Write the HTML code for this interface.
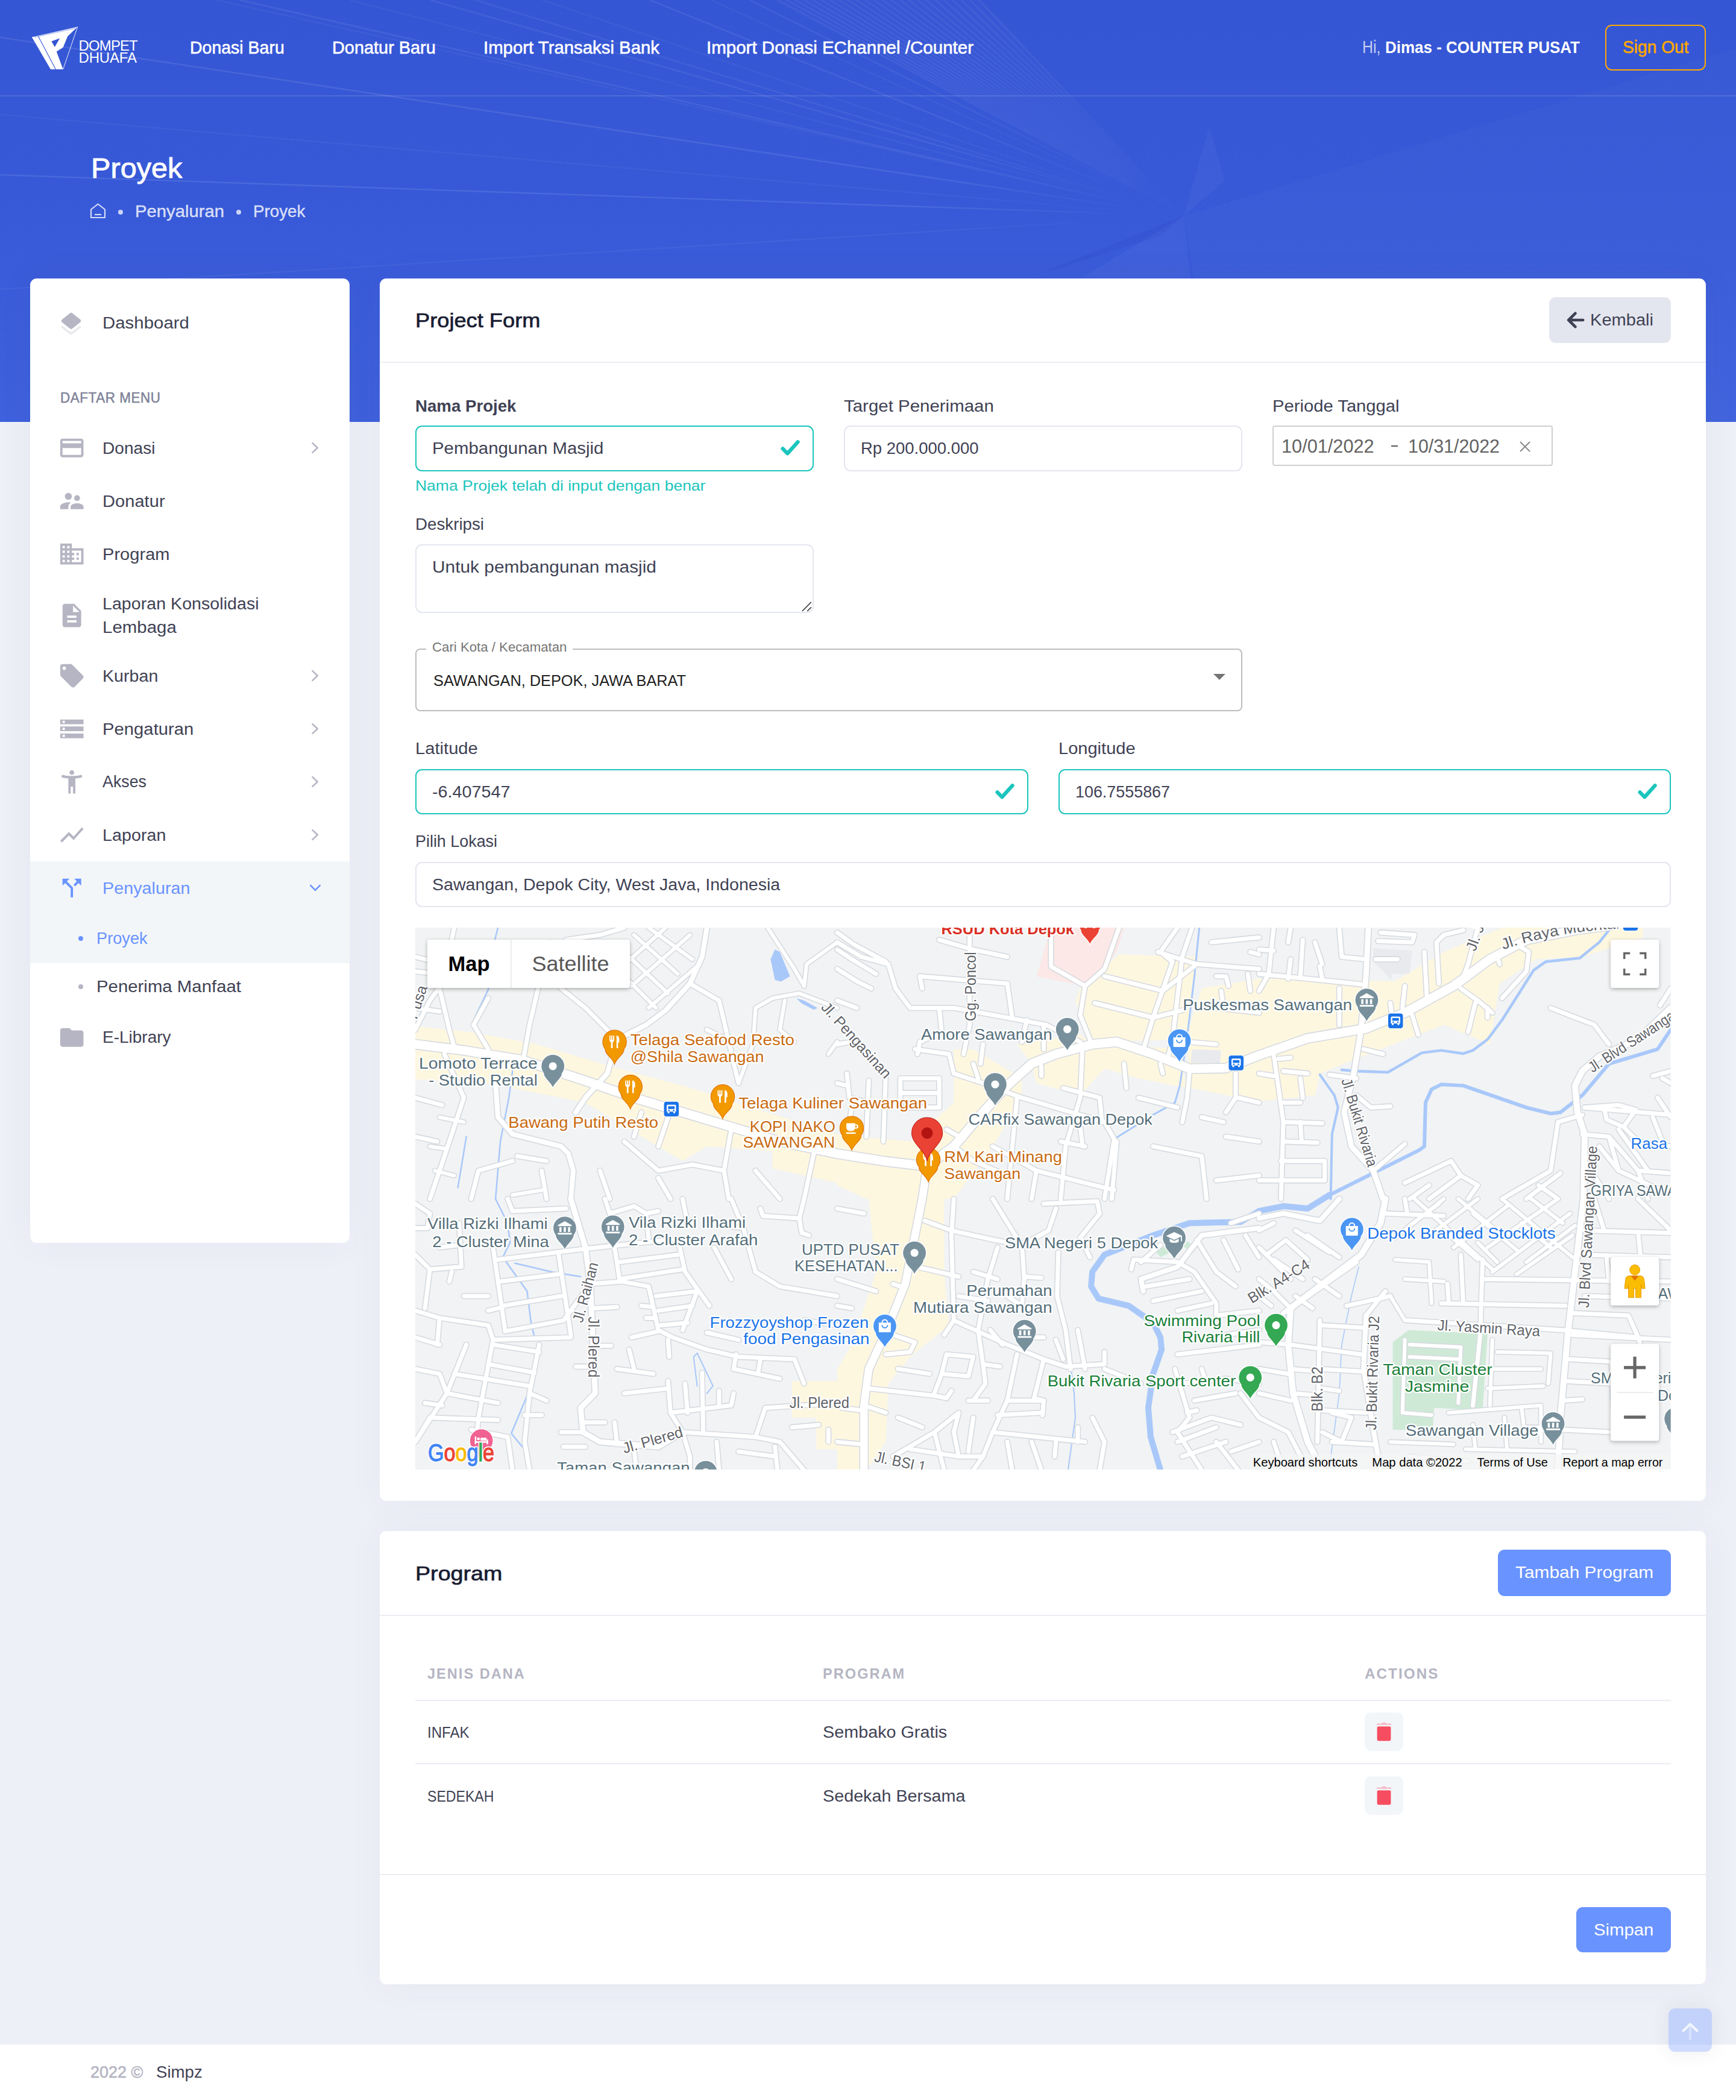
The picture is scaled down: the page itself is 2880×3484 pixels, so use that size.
<!DOCTYPE html>
<html lang="en">
<head>
<meta charset="utf-8">
<title>Proyek</title>
<style>
*{box-sizing:border-box;margin:0;padding:0}
html{background:#EEF0F8}
body{zoom:2;width:1440px;height:1742px;position:relative;overflow:hidden;background:#EEF0F8;font-family:"Liberation Sans",sans-serif;font-size:13.5px;color:#3F4254;-webkit-font-smoothing:antialiased}
.abs{position:absolute}
.t{position:absolute;white-space:nowrap;line-height:1;transform:translateY(-50%)}
/* header */
#hbg{position:absolute;left:0;top:0;width:1440px;height:350px;background:linear-gradient(180deg,#3556D4 0%,#3759D8 45%,#3F61DD 100%);overflow:hidden}
#hline{position:absolute;left:0;top:79px;width:1440px;height:1px;background:rgba(255,255,255,.12)}
.b{position:absolute;white-space:nowrap;line-height:1;transform-origin:0 0;transform:translateY(-.824em) scaleX(var(--sx,1))}
.m{-webkit-text-stroke:.3px currentColor}
.nav{-webkit-text-stroke:.3px #fff;color:#fff;font-size:14.6px;font-weight:400;top:44.25px}
/* cards */
.card{position:absolute;background:#fff;border-radius:5.5px;box-shadow:0 0 30px 0 rgba(82,63,105,.05)}
.hr{position:absolute;left:0;right:0;height:1px;background:#EBEDF3}
/* aside */
.mi{color:#3F4254;font-size:13.5px;left:60px}
.mi.sub{left:55px}
.chev{position:absolute;left:231px;width:10px;height:10px}
.ico{position:absolute;left:23px;width:24px;height:24px;fill:#B5B5C3}
/* form */
.lbl{color:#3F4254;font-size:13.5px}
.inp{position:absolute;height:37.7px;border:1px solid #E4E6EF;border-radius:5.5px;background:#fff}
.inp.ok{border-color:#1BC5BD}
.inp .t{left:13px;top:50%;font-size:13.5px;color:#3F4254}
.chk{position:absolute;right:10px;top:50%;margin-top:-7px;width:14px;height:14px}
.btn{position:absolute;border-radius:5.5px;color:#fff;background:#6993FF}
.th{color:#B5B5C3;font-size:11.7px;font-weight:700}
.td{color:#3F4254;font-size:13.5px}
.del{position:absolute;width:32px;height:32px;border-radius:5.5px;background:#F3F6F9}
</style>
</head>
<body>
<!-- HEADER BG -->
<div id="hbg">
<svg class="abs" style="left:0;top:0" width="1440" height="350" viewBox="0 0 1440 350" fill="none">
<defs><radialGradient id="fade" cx="982" cy="179" r="520" gradientUnits="userSpaceOnUse"><stop offset=".06" stop-color="#000"/><stop offset=".42" stop-color="#fff"/></radialGradient><mask id="fm"><rect width="1440" height="350" fill="url(#fade)"/></mask></defs>
<polygon points="982,179 1440,40 1440,350 1010,350" fill="rgba(255,255,255,.02)"/>
<polygon points="982,179 700,350 1000,350" fill="rgba(255,255,255,.035)"/>
<polygon points="982,179 860,228 962,196" fill="rgba(20,40,160,.08)"/>
<polygon points="982,179 1003,105 1016,150" fill="rgba(255,255,255,.035)"/>
<polygon points="640,0 815,0 982,179" fill="rgba(255,255,255,.012)"/>
<g mask="url(#fm)">
<path d="M982 179 L0 240" stroke="rgba(255,255,255,0.045)" stroke-width="1.3"/>
<path d="M982 179 L0 145" stroke="rgba(255,255,255,0.09)" stroke-width="1.3"/>
<path d="M982 179 L0 95" stroke="rgba(255,255,255,0.04)" stroke-width="1.3"/>
<path d="M982 179 L0 31" stroke="rgba(255,255,255,0.09)" stroke-width="1.3"/>
<path d="M982 179 L0 -40" stroke="rgba(255,255,255,0.04)" stroke-width="1.3"/>
<path d="M982 179 L0 -120" stroke="rgba(255,255,255,0.06)" stroke-width="1.3"/>
<path d="M982 179 L199 0" stroke="rgba(255,255,255,0.07)" stroke-width="1.3"/>
<path d="M982 179 L290 0" stroke="rgba(255,255,255,0.04)" stroke-width="1.3"/>
<path d="M982 179 L357 0" stroke="rgba(255,255,255,0.07)" stroke-width="1.3"/>
<path d="M982 179 L450 0" stroke="rgba(255,255,255,0.04)" stroke-width="1.3"/>
<path d="M982 179 L539 0" stroke="rgba(255,255,255,0.07)" stroke-width="1.3"/>
<path d="M982 179 L590 0" stroke="rgba(255,255,255,0.04)" stroke-width="1.3"/>
<path d="M982 179 L622 0" stroke="rgba(255,255,255,0.06)" stroke-width="1.3"/>
<path d="M982 179 L645.0 0" stroke="rgba(255,255,255,.05)" stroke-width="1.5"/>
<path d="M982 179 L652.3 0" stroke="rgba(255,255,255,.05)" stroke-width="1.5"/>
<path d="M982 179 L659.5 0" stroke="rgba(255,255,255,.05)" stroke-width="1.5"/>
<path d="M982 179 L666.8 0" stroke="rgba(255,255,255,.05)" stroke-width="1.5"/>
<path d="M982 179 L674.0 0" stroke="rgba(255,255,255,.05)" stroke-width="1.5"/>
<path d="M982 179 L681.3 0" stroke="rgba(255,255,255,.05)" stroke-width="1.5"/>
<path d="M982 179 L688.6 0" stroke="rgba(255,255,255,.05)" stroke-width="1.5"/>
<path d="M982 179 L695.8 0" stroke="rgba(255,255,255,.05)" stroke-width="1.5"/>
<path d="M982 179 L703.1 0" stroke="rgba(255,255,255,.05)" stroke-width="1.5"/>
<path d="M982 179 L710.3 0" stroke="rgba(255,255,255,.05)" stroke-width="1.5"/>
<path d="M982 179 L717.6 0" stroke="rgba(255,255,255,.05)" stroke-width="1.5"/>
<path d="M982 179 L724.9 0" stroke="rgba(255,255,255,.05)" stroke-width="1.5"/>
<path d="M982 179 L732.1 0" stroke="rgba(255,255,255,.05)" stroke-width="1.5"/>
<path d="M982 179 L739.4 0" stroke="rgba(255,255,255,.05)" stroke-width="1.5"/>
<path d="M982 179 L746.7 0" stroke="rgba(255,255,255,.05)" stroke-width="1.5"/>
<path d="M982 179 L753.9 0" stroke="rgba(255,255,255,.05)" stroke-width="1.5"/>
<path d="M982 179 L761.2 0" stroke="rgba(255,255,255,.05)" stroke-width="1.5"/>
<path d="M982 179 L768.4 0" stroke="rgba(255,255,255,.05)" stroke-width="1.5"/>
<path d="M982 179 L775.7 0" stroke="rgba(255,255,255,.05)" stroke-width="1.5"/>
<path d="M982 179 L783.0 0" stroke="rgba(255,255,255,.05)" stroke-width="1.5"/>
<path d="M982 179 L790.2 0" stroke="rgba(255,255,255,.05)" stroke-width="1.5"/>
<path d="M982 179 L797.5 0" stroke="rgba(255,255,255,.05)" stroke-width="1.5"/>
<path d="M982 179 L804.7 0" stroke="rgba(255,255,255,.05)" stroke-width="1.5"/>
<path d="M982 179 L812.0 0" stroke="rgba(255,255,255,.05)" stroke-width="1.5"/>
</g>
</svg>
</div>
<div id="hline"></div>
<!-- TOPBAR -->
<svg class="abs" style="left:0;top:0" width="140" height="80" viewBox="0 0 140 80">
<g fill="#fff" stroke="none">
<path d="M26.4 30.7 L64.4 22.1 L56.1 30.1 L52.3 39.4 L46.9 42.7 L52.3 57.5 L42 57.5 Z"/>
</g>
<path d="M42.7 34.3 L49.6 31.8 L45.4 39.0 Z" fill="#3556D4"/>
<path d="M31.8 30.2 L46.2 57.5" stroke="#3556D4" stroke-width=".55" fill="none"/><path d="M27.5 30.45 L64 22.2 M29 30.9 L62 23.6" stroke="#3556D4" stroke-width=".25" fill="none"/>
<path d="M64.4 22.1 L52.3 57.5" stroke="#fff" stroke-width=".45" fill="none"/>
</svg>
<div class="b" style="left:65.3px;top:41.8px;font-size:12px;color:#fff;letter-spacing:-.45px">DOMPET</div>
<div class="b" style="left:65.3px;top:52.2px;font-size:12px;color:#fff;letter-spacing:-.1px">DHUAFA</div>
<div class="b nav" id="n1" style="left:157.4px;--sx:0.9762">Donasi Baru</div>
<div class="b nav" id="n2" style="left:275.6px;--sx:0.9896">Donatur Baru</div>
<div class="b nav" id="n3" style="left:401.2px;--sx:1.0056">Import Transaksi Bank</div>
<div class="b nav" id="n4" style="left:586px;--sx:1.0113">Import Donasi EChannel /Counter</div>
<div class="b" id="n5" style="left:1130px;top:43.9px;font-size:14.6px;color:rgba(255,255,255,.72);--sx:0.8518">Hi,</div>
<div class="b" id="n6" style="left:1149px;top:43.9px;font-size:13.9px;color:#fff;font-weight:700;--sx:0.9350">Dimas - COUNTER PUSAT</div>
<div class="abs" style="left:1331.7px;top:20.7px;width:83.2px;height:38px;border:1px solid #FFA800;border-radius:5.5px"></div>
<div class="b" id="n7" style="left:1346px;top:43.9px;font-size:14.6px;color:#FFA800;-webkit-text-stroke:.3px #FFA800;--sx:0.9650">Sign Out</div>

<!-- SUBHEADER -->
<div class="b" id="s1" style="left:75.3px;top:147.1px;font-size:23.3px;color:#fff;-webkit-text-stroke:.45px #fff;--sx:1.0440">Proyek</div>
<svg class="abs" style="left:74.7px;top:168.7px" width="13.5" height="12.7" viewBox="0 0 27 25.4" fill="none" stroke="rgba(255,255,255,.78)" stroke-width="2.2" stroke-linejoin="round"><path d="M2 10.5 L13.5 1.5 L25 10.5 V24 H2 Z"/><path d="M8 19 H19"/></svg>
<div class="abs" style="left:98px;top:173.9px;width:4px;height:4px;border-radius:50%;background:rgba(255,255,255,.75)"></div>
<div class="b" id="s2" style="left:111.8px;top:180px;font-size:13.8px;color:rgba(255,255,255,.8);-webkit-text-stroke:.2px rgba(255,255,255,.8);--sx:1.0601">Penyaluran</div>
<div class="abs" style="left:196px;top:173.9px;width:4px;height:4px;border-radius:50%;background:rgba(255,255,255,.75)"></div>
<div class="b" id="s3" style="left:210px;top:180px;font-size:13.8px;color:rgba(255,255,255,.8);-webkit-text-stroke:.2px rgba(255,255,255,.8);--sx:1.0059">Proyek</div>

<!-- ASIDE -->
<div class="card" style="left:25px;top:231px;width:265px;height:799.8px">
<svg class="abs" style="left:22.2px;top:25.4px" width="24" height="24" viewBox="0 0 24 24"><path fill="#B5B5C3" d="M12.9336061,16.072447 L19.36,10.9564761 L19.5181585,10.8312381 C20.1676248,10.3169571 20.2772143,9.3735535 19.7629333,8.72408713 C19.6917232,8.63415859 19.6104327,8.55269514 19.5206557,8.48129411 L12.9336854,3.24257445 C12.3871201,2.80788259 11.6128799,2.80788259 11.0663146,3.24257445 L4.47482784,8.48488609 C3.82645598,9.00054628 3.71887192,9.94418071 4.23453211,10.5925526 C4.30500305,10.6811601 4.38527899,10.7615046 4.47382636,10.8320511 L4.63,10.9564761 L11.0659024,16.0730648 C11.6126744,16.5077525 12.3871218,16.5074963 12.9336061,16.072447 Z"/><path fill="#B5B5C3" opacity=".3" d="M11.0563554,18.6706981 L5.33593024,14.122919 C4.94553994,13.8125559 4.37746707,13.8774308 4.06710397,14.2678211 C3.75257288,14.6738539 3.82516916,15.244888 4.22214834,15.5523151 L11.0872776,20.8031356 C11.6250734,21.2144692 12.371757,21.2145375 12.909628,20.8033023 L19.7677785,15.559828 C20.1693192,15.2528257 20.2459576,14.6784381 19.9389553,14.2768974 C19.6266937,13.8743807 19.0546209,13.8021712 18.6572397,14.1104775 L12.9235044,18.6705218 C12.377022,19.1051477 11.6029199,19.1052208 11.0563554,18.6706981 Z"/></svg>
<div class="b mi" id="a0" style="left:60.2px;top:41.6px;color:#3F4254;--sx:1.0901">Dashboard</div>
<div class="b" id="adm" style="left:25.2px;top:103.0px;font-size:11.9px;color:#7E8299;-webkit-text-stroke:.25px #7E8299;letter-spacing:0.30px;--sx:0.9426">DAFTAR MENU</div>
<svg class="abs" style="left:22.9px;top:129.0px" width="23.2" height="23.2" viewBox="0 0 24 24" fill="#B5B5C3"><path d="M20 4H4c-1.11 0-1.99.89-1.99 2L2 18c0 1.11.89 2 2 2h16c1.11 0 2-.89 2-2V6c0-1.11-.89-2-2-2zm0 14H4v-6h16v6zm0-10H4V6h16v2z"/></svg>
<div class="b mi" id="a1" style="left:60.2px;top:145.3px;color:#3F4254;--sx:1.0411">Donasi</div>
<svg class="abs" style="left:232.75px;top:135.6px" width="7" height="10" viewBox="0 0 7 10" fill="none" stroke="#B5B5C3" stroke-width="1.25" stroke-linecap="round" stroke-linejoin="round"><path d="M1.2 1.1 L5.4 5 L1.2 8.9"/></svg>
<svg class="abs" style="left:22.9px;top:173.0px" width="23.2" height="23.2" viewBox="0 0 24 24" fill="#B5B5C3"><path d="M16.5 12c1.38 0 2.49-1.12 2.49-2.5S17.88 7 16.5 7C15.12 7 14 8.12 14 9.5s1.12 2.5 2.5 2.5zM9 11c1.66 0 2.99-1.34 2.99-3S10.66 5 9 5C7.34 5 6 6.34 6 8s1.34 3 3 3zm7.5 3c-1.83 0-5.5.92-5.5 2.75V19h11v-2.25c0-1.83-3.67-2.75-5.5-2.75zM9 13c-2.33 0-7 1.17-7 3.5V19h7v-2.25c0-.85.33-2.34 2.37-3.47C10.5 13.1 9.66 13 9 13z"/></svg>
<div class="b mi" id="a2" style="left:60.2px;top:189.3px;color:#3F4254;--sx:1.0785">Donatur</div>
<svg class="abs" style="left:22.9px;top:217.0px" width="23.2" height="23.2" viewBox="0 0 24 24" fill="#B5B5C3"><path d="M12 7V3H2v18h20V7H12zM6 19H4v-2h2v2zm0-4H4v-2h2v2zm0-4H4V9h2v2zm0-4H4V5h2v2zm4 12H8v-2h2v2zm0-4H8v-2h2v2zm0-4H8V9h2v2zm0-4H8V5h2v2zm10 12h-8v-2h2v-2h-2v-2h2v-2h-2V9h8v10zm-2-8h-2v2h2v-2zm0 4h-2v2h2v-2z"/></svg>
<div class="b mi" id="a3" style="left:60.2px;top:233.3px;color:#3F4254;--sx:1.0779">Program</div>
<svg class="abs" style="left:22.9px;top:318.0px" width="23.2" height="23.2" viewBox="0 0 24 24" fill="#B5B5C3"><path d="M21.41 11.58l-9-9C12.05 2.22 11.55 2 11 2H4c-1.1 0-2 .9-2 2v7c0 .55.22 1.05.59 1.42l9 9c.36.36.86.58 1.41.58.55 0 1.05-.22 1.41-.59l7-7c.37-.36.59-.86.59-1.41 0-.55-.23-1.06-.59-1.42zM5.5 7C4.67 7 4 6.33 4 5.5S4.67 4 5.5 4 7 4.67 7 5.5 6.33 7 5.5 7z"/></svg>
<div class="b mi" id="a5" style="left:60.2px;top:334.3px;color:#3F4254;--sx:1.0611">Kurban</div>
<svg class="abs" style="left:232.75px;top:324.6px" width="7" height="10" viewBox="0 0 7 10" fill="none" stroke="#B5B5C3" stroke-width="1.25" stroke-linecap="round" stroke-linejoin="round"><path d="M1.2 1.1 L5.4 5 L1.2 8.9"/></svg>
<svg class="abs" style="left:22.9px;top:362.1px" width="23.2" height="23.2" viewBox="0 0 24 24" fill="#B5B5C3"><path d="M2 20h20v-4H2v4zm2-3h2v2H4v-2zM2 4v4h20V4H2zm4 3H4V5h2v2zm-4 7h20v-4H2v4zm2-3h2v2H4v-2z"/></svg>
<div class="b mi" id="a6" style="left:60.2px;top:378.4px;color:#3F4254;--sx:1.0843">Pengaturan</div>
<svg class="abs" style="left:232.75px;top:368.7px" width="7" height="10" viewBox="0 0 7 10" fill="none" stroke="#B5B5C3" stroke-width="1.25" stroke-linecap="round" stroke-linejoin="round"><path d="M1.2 1.1 L5.4 5 L1.2 8.9"/></svg>
<svg class="abs" style="left:22.9px;top:405.9px" width="23.2" height="23.2" viewBox="0 0 24 24" fill="#B5B5C3"><path d="M20.5 6c-2.61.7-5.67 1-8.5 1s-5.89-.3-8.5-1L3 8c1.86.5 4 .83 6 1v13h2v-6h2v6h2V9c2-.17 4.14-.5 6-1l-.5-2zM12 6c1.1 0 2-.9 2-2s-.9-2-2-2-2 .9-2 2 .9 2 2 2z"/></svg>
<div class="b mi" id="a7" style="left:60.2px;top:422.2px;color:#3F4254;--sx:0.9928">Akses</div>
<svg class="abs" style="left:232.75px;top:412.5px" width="7" height="10" viewBox="0 0 7 10" fill="none" stroke="#B5B5C3" stroke-width="1.25" stroke-linecap="round" stroke-linejoin="round"><path d="M1.2 1.1 L5.4 5 L1.2 8.9"/></svg>
<svg class="abs" style="left:22.9px;top:450.0px" width="23.2" height="23.2" viewBox="0 0 24 24" fill="#B5B5C3"><path d="M3.5 18.49l6-6.01 4 4L22 6.92l-1.41-1.41-7.09 7.97-4-4L2 16.99z"/></svg>
<div class="b mi" id="a8" style="left:60.2px;top:466.3px;color:#3F4254;--sx:1.0636">Laporan</div>
<svg class="abs" style="left:232.75px;top:456.6px" width="7" height="10" viewBox="0 0 7 10" fill="none" stroke="#B5B5C3" stroke-width="1.25" stroke-linecap="round" stroke-linejoin="round"><path d="M1.2 1.1 L5.4 5 L1.2 8.9"/></svg>
<svg class="abs" style="left:22.9px;top:617.8px" width="23.2" height="23.2" viewBox="0 0 24 24" fill="#B5B5C3"><path d="M10 4H4c-1.1 0-1.99.9-1.99 2L2 18c0 1.1.9 2 2 2h16c1.1 0 2-.9 2-2V8c0-1.1-.9-2-2-2h-8l-2-2z"/></svg>
<div class="b mi" id="a10" style="left:60.2px;top:634.1px;color:#3F4254;--sx:1.0371">E-Library</div>
<svg class="abs" style="left:22.9px;top:267.8px" width="23.2" height="23.2" viewBox="0 0 24 24" fill="#B5B5C3"><path d="M14 2H6c-1.1 0-1.99.9-1.99 2L4 20c0 1.1.89 2 1.99 2H18c1.1 0 2-.9 2-2V8l-6-6zm2 16H8v-2h8v2zm0-4H8v-2h8v2zm-3-5V3.5L18.5 9H13z"/></svg>
<div class="b mi" id="a4a" style="left:60.2px;top:274.3px;color:#3F4254;--sx:1.0609">Laporan Konsolidasi</div>
<div class="b mi" id="a4b" style="left:60.2px;top:293.8px;color:#3F4254;--sx:1.0906">Lembaga</div>
<div class="abs" style="left:0;top:483.5px;width:265px;height:84.3px;background:#F3F6F9"></div>
<svg class="abs" style="left:22.9px;top:494.0px" width="23.2" height="23.2" viewBox="0 0 24 24" fill="#6993FF"><path d="M14 4l2.29 2.29-2.88 2.88 1.42 1.42 2.88-2.88L20 10V4zm-4 0H4v6l2.29-2.29 4.71 4.7V20h2v-8.41l-5.29-5.3z"/></svg>
<div class="b mi" id="a9" style="left:60.2px;top:510.3px;color:#6993FF;--sx:1.0658">Penyaluran</div>
<svg class="abs" style="left:231.25px;top:502.1px" width="10" height="7" viewBox="0 0 10 7" fill="none" stroke="#6993FF" stroke-width="1.25" stroke-linecap="round" stroke-linejoin="round"><path d="M1.1 1.4 L5 5.4 L8.9 1.4"/></svg>
<div class="abs" style="left:40px;top:545.5px;width:4px;height:4px;border-radius:50%;background:#6993FF"></div>
<div class="b mi" id="a9a" style="left:55.2px;top:552.2px;color:#6993FF;--sx:1.0066">Proyek</div>
<div class="abs" style="left:40px;top:585.5px;width:4px;height:4px;border-radius:50%;background:#B5B5C3"></div>
<div class="b mi" id="a9b" style="left:55.2px;top:592.2px;color:#3F4254;--sx:1.0878">Penerima Manfaat</div>
</div>
<!-- CARD1 -->
<div class="card" style="left:315px;top:231px;width:1100px;height:1014px">
<div class="b" id="c1t" style="left:29.5px;top:40px;font-size:17px;color:#181C32;-webkit-text-stroke:.35px #181C32;--sx:1.0658">Project Form</div>
<div class="hr" style="top:69px"></div>
<div class="abs" style="left:970px;top:15.25px;width:100.85px;height:38.1px;border-radius:5.5px;background:#E4E6EF"></div>
<svg class="abs" style="left:984.3px;top:27.7px" width="15" height="14" viewBox="0 0 15 14" fill="none" stroke="#3F4254" stroke-width="2.3" stroke-linecap="round" stroke-linejoin="round"><path d="M13.6 7 H1.8 M7.2 1.4 L1.6 7 L7.2 12.6"/></svg>
<div class="b" id="kb" style="left:1003.8px;top:38.8px;font-size:13.5px;color:#3F4254;--sx:1.0764">Kembali</div>
<div class="b lbl" id="l1" style="left:29.5px;top:110.3px;font-weight:700;--sx:1.0239">Nama Projek</div>
<div class="b lbl" id="l2" style="left:385px;top:110.3px;--sx:1.0906">Target Penerimaan</div>
<div class="b lbl" id="l3" style="left:740.6px;top:110.3px;--sx:1.0819">Periode Tanggal</div>
<div class="inp ok" style="left:29.5px;top:122.1px;width:330.3px;height:37.7px"><svg class="abs" style="right:9.7px;top:10.4px" width="17" height="15" viewBox="0 0 17 15" fill="none" stroke="#1BC5BD" stroke-width="3.1" stroke-linejoin="round" stroke-linecap="round"><path d="M2.3 7.7 L6.2 11.7 L14.8 2.1"/></svg></div><div class="b td" id="i1" style="left:43.6px;top:145.7px;--sx:1.0889">Pembangunan Masjid</div>
<div class="inp" style="left:385px;top:122.1px;width:330.3px;height:37.7px"></div><div class="b td" id="i2" style="left:399.1px;top:145.7px;--sx:1.0178">Rp 200.000.000</div>
<div class="abs" style="left:740.6px;top:122.2px;width:232.5px;height:33.5px;border:1px solid #CFCFCF;border-radius:2px;background:#fff"></div>
<div class="b" id="d1" style="left:748.2px;top:144.4px;font-size:15.8px;color:#636363;--sx:0.9714">10/01/2022</div>
<div class="abs" style="left:839px;top:138.3px;width:5.6px;height:1.1px;background:#555"></div>
<div class="b" id="d2" style="left:852.8px;top:144.4px;font-size:15.8px;color:#636363;--sx:0.9613">10/31/2022</div>
<svg class="abs" style="left:945.4px;top:134.9px" width="9" height="9" viewBox="0 0 9 9" stroke="#888" stroke-width="1" fill="none"><path d="M.5 .5 L8.5 8.5 M8.5 .5 L.5 8.5"/></svg>
<div class="b" id="fb" style="left:29.5px;top:176.2px;font-size:11.8px;color:#1BC5BD;--sx:1.1224">Nama Projek telah di input dengan benar</div>
<div class="b lbl" id="l4" style="left:29.5px;top:208.3px;--sx:1.0267">Deskripsi</div>
<div class="inp" style="left:29.5px;top:220.5px;width:330.3px;height:56.8px"><svg class="abs" style="right:.3px;bottom:-.2px" width="8.4" height="8.4" viewBox="0 0 9 9" stroke="#444" stroke-width=".9" fill="none"><path d="M.5 8.5 L8.5 .5 M5 8.5 L8.5 5"/></svg></div>
<div class="b td" id="i3" style="left:43.6px;top:244.1px;--sx:1.1064">Untuk pembangunan masjid</div>
<div class="abs" style="left:29.5px;top:306.85px;width:686px;height:52.2px;border:1px solid #BDBDBD;border-radius:4px"></div>
<div class="abs" style="left:38.7px;top:304px;width:121.3px;height:6px;background:#fff"></div>
<div class="b" id="ml" style="left:43.5px;top:309.7px;font-size:11px;color:#757575;--sx:1.0093">Cari Kota / Kecamatan</div>
<div class="b" id="mv" style="left:44.3px;top:337.3px;font-size:13px;color:#212121;--sx:0.9733">SAWANGAN, DEPOK, JAWA BARAT</div>
<svg class="abs" style="left:691.5px;top:328px" width="10" height="5" viewBox="0 0 10 5"><path d="M0 0 H10 L5 5 Z" fill="#757575"/></svg>
<div class="b lbl" id="l5" style="left:29.5px;top:394.65px;--sx:1.0802">Latitude</div>
<div class="b lbl" id="l6" style="left:562.75px;top:394.65px;--sx:1.0757">Longitude</div>
<div class="inp ok" style="left:29.5px;top:406.95px;width:508.25px;height:37.7px"><svg class="abs" style="right:9.7px;top:10.4px" width="17" height="15" viewBox="0 0 17 15" fill="none" stroke="#1BC5BD" stroke-width="3.1" stroke-linejoin="round" stroke-linecap="round"><path d="M2.3 7.7 L6.2 11.7 L14.8 2.1"/></svg></div><div class="b td" id="i4" style="left:43.6px;top:430.55px;--sx:1.0641">-6.407547</div>
<div class="inp ok" style="left:562.75px;top:406.95px;width:508.1px;height:37.7px"><svg class="abs" style="right:9.7px;top:10.4px" width="17" height="15" viewBox="0 0 17 15" fill="none" stroke="#1BC5BD" stroke-width="3.1" stroke-linejoin="round" stroke-linecap="round"><path d="M2.3 7.7 L6.2 11.7 L14.8 2.1"/></svg></div><div class="b td" id="i5" style="left:576.85px;top:430.55px;--sx:0.9957">106.7555867</div>
<div class="b lbl" id="l7" style="left:29.5px;top:471.5px;--sx:0.9958">Pilih Lokasi</div>
<div class="inp" style="left:29.5px;top:483.75px;width:1041.35px;height:37.7px"></div><div class="b td" id="i6" style="left:43.6px;top:507.35px;--sx:1.0585">Sawangan, Depok City, West Java, Indonesia</div>
<!--MAP-START-->
<svg class="abs" style="left:29.5px;top:538.5px" width="1041.35" height="449.7" viewBox="0 0 2083 899.4" font-family="Liberation Sans, sans-serif">
<defs><clipPath id="mc"><rect width="2083" height="899.4"/></clipPath></defs>
<g clip-path="url(#mc)"><rect width="2083" height="899.4" fill="#F1F3F4"/>
<path d="M0.0 163.3 L92.7 173.4 L201.6 193.5 L322.6 229.8 L443.5 262.1 L564.5 300.4 L700.0 342.7 L700.0 423.4 L592.7 399.2 L592.7 370.9 L483.8 362.9 L443.5 387.1 L403.2 362.9 L282.2 290.3 L121.0 258.0 L0.0 252.0 Z" fill="#FEF7E0"/>
<path d="M700.0 342.7 L821.0 354.8 L893.5 290.3 L893.5 201.6 L925.8 201.6 L1006.4 250.0 L1006.4 282.2 L958.0 362.9 L893.5 450.0 L748.4 450.0 L700.0 427.4 Z" fill="#FEF7E0"/>
<path d="M998.4 193.5 L1103.2 177.4 L1119.3 189.5 L1264.5 201.6 L1280.6 266.1 L1200.0 250.0 L1143.5 233.9 L1103.2 278.2 L1030.6 258.0 L1022.6 225.8 Z" fill="#FEF7E0"/>
<path d="M1167.7 44.4 L1296.7 48.4 L1288.7 121.0 L1280.6 185.5 L1123.4 189.5 L1095.1 121.0 L1103.2 100.8 Z" fill="#FEF7E0"/>
<path d="M1280.6 177.4 L1304.8 100.8 L1400.0 84.7 L1400.0 288.3 L1284.6 266.1 Z" fill="#FEF7E0"/>
<path d="M1400.0 84.7 L1625.8 88.7 L1706.4 40.3 L1803.2 0.0 L2037.1 0.0 L2037.1 16.1 L1936.3 48.4 L1859.6 52.4 L1799.2 92.7 L1783.0 193.5 L1706.4 161.3 L1601.6 201.6 L1500.8 241.9 L1492.7 278.2 L1400.0 288.3 Z" fill="#FEF7E0"/>
<path d="M752.4 450.0 L877.4 450.0 L877.4 571.0 L885.5 659.7 L821.0 712.1 L784.7 756.4 L780.6 853.2 L748.4 900.0 L700.0 900.0 L700.0 732.2 L724.2 691.9 L764.5 571.0 Z" fill="#FEF7E0"/>
<path d="M625.0 752.4 L700.0 752.4 L700.0 865.3 L665.3 865.3 L665.3 812.9 L625.0 812.9 Z" fill="#FEF7E0"/>
<path d="M1054.8 0.0 L1175.8 0.0 L1163.7 40.3 L1143.5 68.5 L1111.3 96.8 L1030.6 80.6 Z" fill="#FCE8E6"/>
<path d="M1648.0 667.7 L1779.0 673.8 L1770.9 800.8 L1690.3 796.8 L1688.3 833.0 L1621.8 833.0 L1621.8 687.9 Z" fill="#CEEAD6"/>
<path d="M1228.2 536.7 L1248.4 526.6 L1256.4 536.7 L1236.3 546.8 Z" fill="#CEEAD6"/>
<path d="M1280.6 520.6 L1296.7 530.6 L1288.7 540.7 L1274.6 528.6 Z" fill="#CEEAD6"/>
<path d="M596.7 36.3 L604.8 40.3 L621.7 80.6 L606.8 89.5 L596.7 86.7 L589.5 52.4 Z" fill="#A9C8FA"/>
<path d="M632.2 116.9 L645.1 121.0 L667.3 133.1 L661.2 136.3 L641.1 125.8 Z" fill="#A9C8FA"/>
<path d="M1288.7 201.6 L1337.1 203.6 L1335.0 225.8 L1286.7 223.8 Z" fill="#E8EAED"/>
<path d="M1589.5 34.3 L1654.0 38.3 L1650.0 76.6 L1619.7 76.6 L1619.7 86.7 L1589.5 56.4 Z" fill="#E8EAED"/>
<g fill="none" stroke-linecap="round" stroke-linejoin="round">
<path d="M137.1 0.0 L131.0 24.2 L121.0 102.8 L96.8 153.2" stroke="#A9C8FA" stroke-width="2.5"/>
<path d="M161.3 237.9 L155.2 282.2 L141.1 354.8 L133.1 450.0" stroke="#A9C8FA" stroke-width="2.5"/>
<path d="M84.7 346.8 L70.6 431.4" stroke="#A9C8FA" stroke-width="2.5"/>
<path d="M133.1 450.0 L153.2 490.3 L157.2 522.6 L145.2 546.8 L185.5 603.2 L191.5 651.6 L197.6 679.8" stroke="#A9C8FA" stroke-width="2.5"/>
<path d="M185.5 776.6 L159.3 839.1 L177.4 861.3" stroke="#A9C8FA" stroke-width="2.5"/>
<path d="M165.3 556.8 L225.8 571.0 L274.2 579.0" stroke="#A9C8FA" stroke-width="2.5"/>
<path d="M467.7 760.5 L461.7 712.1 L467.7 706.0 L493.9 760.5 L483.8 772.6" stroke="#A9C8FA" stroke-width="2"/>
<path d="M1300.8 0.0 L1292.7 80.6 L1280.6 181.4 L1268.5 262.1 L1260.4 290.3 L1224.2 310.5 L1159.6 350.8" stroke="#A9C8FA" stroke-width="3"/>
<path d="M1980.6 4.0 L1964.5 24.2 L1932.2 50.4 L1875.8 56.4 L1855.6 70.6 L1803.2 153.2 L1779.0 185.5 L1754.8 203.6 L1738.7 208.9 L1702.4 203.6 L1670.1 207.6 L1613.7 239.9 L1561.3 237.9 L1537.1 235.9" stroke="#A9C8FA" stroke-width="4.5"/>
<path d="M2083.0 169.3 L2061.2 201.6 L1980.6 225.8 L1936.3 278.2 L1900.0 306.4 L1883.8 308.4 L1843.5 298.4 L1738.7 262.1 L1702.4 260.1 L1686.3 268.1 L1676.2 290.3 L1674.2 362.9 L1666.1 368.9 L1593.5 405.2 L1516.9 443.5" stroke="#A9C8FA" stroke-width="6"/>
<path d="M1500.8 243.9 L1525.0 278.2 L1531.0 298.4 L1521.0 342.7 L1518.9 450.0" stroke="#A9C8FA" stroke-width="4"/>
<path d="M1400.0 470.2 L1369.3 488.3 L1284.6 490.3 L1224.2 510.5 L1143.5 542.7 L1123.4 571.0 L1121.3 595.2 L1133.4 615.3 L1183.8 627.4 L1224.2 655.6 L1236.3 679.8 L1238.3 700.0 L1224.2 740.3 L1216.1 796.8 L1220.1 845.1 L1236.3 900.0" stroke="#A9C8FA" stroke-width="10"/>
<path d="M1516.9 443.5 L1480.6 466.1 L1440.3 462.1 L1400.0 470.2" stroke="#A9C8FA" stroke-width="10"/>
<path d="M1081.0 675.8 L1093.1 772.6 L1095.1 812.9 L1083.0 900.0" stroke="#A9C8FA" stroke-width="2"/>
<path d="M1565.3 562.9 L1553.2 611.3 L1537.1 691.9 L1533.1 772.6 L1516.9 893.5" stroke="#A9C8FA" stroke-width="1.5"/>
<g stroke="#D6DADF">
<path d="M0.0 193.5 L80.6 203.6 L177.4 219.7 L282.2 254.0 L362.9 282.2 L443.5 306.4 L524.2 330.6 L604.8 354.8 L700.0 375.0" stroke-width="17.7"/>
<path d="M700.0 375.0 L780.6 387.9 L849.2 395.9" stroke-width="17.7"/>
<path d="M849.2 395.9 L893.5 362.9 L941.9 306.4 L982.2 262.1 L1022.6 225.8 L1062.9 209.7 L1123.4 193.5 L1163.7 189.5 L1224.2 209.7 L1284.6 233.9 L1345.1 233.0 L1400.0 211.7" stroke-width="17.7"/>
<path d="M1400.0 211.7 L1480.6 183.5 L1577.4 167.3 L1641.9 141.1 L1722.6 96.8 L1783.0 52.4 L1843.5 20.2 L1924.2 4.0 L1984.6 -4.0" stroke-width="17.7"/>
<path d="M849.2 395.9 L841.1 450.0" stroke-width="15.7"/>
<path d="M841.1 450.0 L829.0 510.5 L812.9 591.1 L780.6 671.8 L752.4 732.2 L744.4 792.7 L744.4 900.0" stroke-width="15.7"/>
<path d="M483.8 0.0 L475.8 48.4 L455.6 92.7 L415.3 137.1 L383.0 161.3 L334.7 185.5 L318.5 241.9 L282.2 282.2 L266.1 306.4" stroke-width="11.2"/>
<path d="M203.6 100.8 L189.5 161.3 L179.4 217.7" stroke-width="10.2"/>
<path d="M358.8 96.8 L455.6 12.1" stroke-width="9.2"/>
<path d="M387.1 133.1 L471.7 60.5" stroke-width="9.2"/>
<path d="M338.7 68.5 L415.3 0.0" stroke-width="9.2"/>
<path d="M362.9 12.1 L435.5 76.6" stroke-width="9.2"/>
<path d="M387.1 0.0 L459.6 52.4" stroke-width="9.2"/>
<path d="M350.8 44.4 L419.3 108.9" stroke-width="9.2"/>
<path d="M342.7 76.6 L399.2 133.1" stroke-width="9.2"/>
<path d="M346.8 0.0 L306.4 12.1 L250.0 20.2" stroke-width="10.2"/>
<path d="M40.3 100.8 L56.4 169.3 L64.5 197.6" stroke-width="10.2"/>
<path d="M0.0 48.4 L24.2 54.4" stroke-width="10.2"/>
<path d="M96.8 161.3 L121.0 201.6" stroke-width="10.2"/>
<path d="M121.0 116.9 L96.8 161.3" stroke-width="10.2"/>
<path d="M0.0 169.3 L24.2 121.0 L44.4 92.7 L56.4 40.3 L64.5 0.0" stroke-width="10.2"/>
<path d="M0.0 133.1 L40.3 139.1" stroke-width="10.2"/>
<path d="M0.0 72.6 L20.2 74.6" stroke-width="10.2"/>
<path d="M133.1 258.0 L137.1 314.5 L161.3 342.7 L241.9 362.9 L254.0 375.0 L262.1 403.2 L258.0 450.0" stroke-width="11.2"/>
<path d="M48.4 209.7 L80.6 282.2 L40.3 403.2 L24.2 450.0" stroke-width="10.2"/>
<path d="M80.6 322.6 L40.3 314.5" stroke-width="9.2"/>
<path d="M52.4 366.9 L24.2 362.9" stroke-width="9.2"/>
<path d="M64.5 411.3 L32.3 403.2" stroke-width="9.2"/>
<path d="M419.3 314.5 L403.2 362.9" stroke-width="10.2"/>
<path d="M375.0 306.4 L362.9 346.8" stroke-width="10.2"/>
<path d="M524.2 334.7 L512.1 403.2 L520.1 450.0" stroke-width="10.2"/>
<path d="M459.6 393.1 L512.1 403.2" stroke-width="10.2"/>
<path d="M661.2 375.0 L645.1 450.0" stroke-width="10.2"/>
<path d="M306.4 403.2 L322.6 450.0" stroke-width="10.2"/>
<path d="M209.7 403.2 L217.7 450.0" stroke-width="10.2"/>
<path d="M161.3 443.5 L209.7 435.5" stroke-width="9.2"/>
<path d="M560.4 193.5 L564.5 133.1 L592.7 116.9 L637.1 108.9 L700.0 133.1" stroke-width="9.2"/>
<path d="M645.1 96.8 L649.2 60.5 L700.0 24.2" stroke-width="9.2"/>
<path d="M536.3 258.0 L560.4 193.5" stroke-width="9.2"/>
<path d="M584.6 0.0 L629.0 68.5 L645.1 96.8" stroke-width="9.2"/>
<path d="M612.9 121.0 L604.8 169.3 L629.0 189.5" stroke-width="9.2"/>
<path d="M700.0 189.5 L685.4 209.7" stroke-width="9.2"/>
<path d="M1167.7 0.0 L1143.5 68.5 L1111.3 96.8 L1103.2 145.2 L1119.3 185.5" stroke-width="10.2"/>
<path d="M1054.8 0.0 L1054.8 64.5 L1111.3 96.8" stroke-width="10.2"/>
<path d="M1143.5 80.6 L1240.3 104.8 L1296.7 60.5 L1400.0 68.5" stroke-width="10.2"/>
<path d="M1127.4 125.0 L1224.2 149.2 L1272.5 137.1" stroke-width="10.2"/>
<path d="M1264.5 0.0 L1236.3 40.3 L1256.4 56.4 L1224.2 149.2 L1208.0 201.6" stroke-width="10.2"/>
<path d="M1288.7 0.0 L1272.5 48.4 L1256.4 185.5 L1248.4 217.7" stroke-width="10.2"/>
<path d="M1232.2 40.3 L1296.7 60.5" stroke-width="10.2"/>
<path d="M784.7 60.5 L796.8 100.8 L821.0 133.1 L893.5 133.1 L982.2 149.2 L1046.8 161.3 L1103.2 189.5" stroke-width="10.2"/>
<path d="M837.1 80.6 L982.2 92.7" stroke-width="10.2"/>
<path d="M837.1 80.6 L841.1 100.8" stroke-width="10.2"/>
<path d="M869.3 20.2 L925.8 36.3 L982.2 48.4" stroke-width="10.2"/>
<path d="M919.7 0.0 L919.7 161.3 L909.7 209.7" stroke-width="10.2"/>
<path d="M829.0 201.6 L885.5 209.7 L893.5 241.9 L941.9 258.0 L1006.4 282.2" stroke-width="10.2"/>
<path d="M804.8 250.0 L869.3 250.0 L869.3 298.4 L804.8 298.4 L804.8 250.0" stroke-width="10.2"/>
<path d="M804.8 274.2 L869.3 274.2" stroke-width="10.2"/>
<path d="M716.1 241.9 L720.2 282.2 L752.4 290.3" stroke-width="10.2"/>
<path d="M752.4 254.0 L748.4 346.8" stroke-width="10.2"/>
<path d="M700.0 258.0 L716.1 262.1" stroke-width="10.2"/>
<path d="M1107.2 193.5 L1103.2 282.2 L1079.0 362.9 L1070.9 450.0" stroke-width="10.2"/>
<path d="M1006.4 282.2 L1143.5 322.6 L1159.6 350.8 L1143.5 450.0" stroke-width="10.2"/>
<path d="M958.0 362.9 L1030.6 403.2 L1159.6 435.5" stroke-width="10.2"/>
<path d="M1175.8 225.8 L1179.8 266.1" stroke-width="10.2"/>
<path d="M1236.3 225.8 L1240.3 241.9" stroke-width="10.2"/>
<path d="M1038.7 229.8 L1038.7 246.0" stroke-width="10.2"/>
<path d="M1075.0 266.1 L1135.5 282.2 L1139.5 322.6" stroke-width="10.2"/>
<path d="M1284.6 237.9 L1280.6 282.2 L1272.5 322.6" stroke-width="10.2"/>
<path d="M1304.8 314.5 L1341.1 322.6" stroke-width="10.2"/>
<path d="M1329.0 419.3 L1400.0 411.3" stroke-width="10.2"/>
<path d="M1361.2 241.9 L1361.2 282.2 L1345.1 306.4" stroke-width="10.2"/>
<path d="M1329.0 80.6 L1345.1 80.6 L1349.2 96.8" stroke-width="10.2"/>
<path d="M1381.4 76.6 L1385.4 104.8" stroke-width="10.2"/>
<path d="M1280.6 189.5 L1329.0 193.5" stroke-width="10.2"/>
<path d="M700.0 24.2 L740.3 48.4 L784.7 60.5" stroke-width="10.2"/>
<path d="M700.0 121.0 L732.3 133.1" stroke-width="10.2"/>
<path d="M700.0 193.5 L724.2 189.5" stroke-width="10.2"/>
<path d="M893.5 362.9 L925.8 387.1 L982.2 411.3" stroke-width="10.2"/>
<path d="M998.4 282.2 L982.2 450.0" stroke-width="10.2"/>
<path d="M1103.2 330.6 L1107.2 362.9" stroke-width="10.2"/>
<path d="M1581.4 0.0 L1577.4 80.6 L1569.3 169.3 L1557.2 241.9 L1541.1 306.4 L1553.2 362.9 L1589.5 403.2 L1605.6 450.0" stroke-width="12.2"/>
<path d="M1400.0 76.6 L1480.6 84.7 L1577.4 94.8" stroke-width="10.2"/>
<path d="M1424.2 0.0 L1416.1 76.6 L1400.0 104.8" stroke-width="10.2"/>
<path d="M1472.6 20.2 L1468.5 80.6" stroke-width="10.2"/>
<path d="M1452.4 52.4 L1448.4 84.7" stroke-width="10.2"/>
<path d="M1500.8 64.5 L1504.8 84.7" stroke-width="10.2"/>
<path d="M1533.1 100.8 L1533.1 161.3" stroke-width="10.2"/>
<path d="M1424.2 209.7 L1440.3 322.6 L1436.3 450.0" stroke-width="10.2"/>
<path d="M1440.3 322.6 L1504.8 324.6" stroke-width="10.2"/>
<path d="M1440.3 354.8 L1496.8 356.8" stroke-width="10.2"/>
<path d="M1436.3 387.1 L1508.9 387.1 L1508.9 419.3 L1400.0 419.3" stroke-width="10.2"/>
<path d="M1440.3 290.3 L1468.5 290.3" stroke-width="10.2"/>
<path d="M1432.3 217.7 L1452.4 215.7" stroke-width="10.2"/>
<path d="M1440.3 237.9 L1480.6 241.9" stroke-width="10.2"/>
<path d="M1516.9 243.9 L1561.3 250.0" stroke-width="10.2"/>
<path d="M1573.4 201.6 L1605.6 209.7" stroke-width="10.2"/>
<path d="M1561.3 278.2 L1585.5 298.4 L1617.7 296.4" stroke-width="10.2"/>
<path d="M1593.5 52.4 L1629.8 52.4" stroke-width="10.2"/>
<path d="M1601.6 8.1 L1658.0 12.1 L1654.0 24.2 L1597.6 22.2" stroke-width="10.2"/>
<path d="M1641.9 96.8 L1637.9 133.1" stroke-width="10.2"/>
<path d="M1674.2 40.3 L1678.2 112.9" stroke-width="10.2"/>
<path d="M1654.0 145.2 L1664.1 177.4" stroke-width="10.2"/>
<path d="M1617.7 125.0 L1619.7 141.1" stroke-width="10.2"/>
<path d="M1762.9 0.0 L1746.8 60.5 L1734.7 92.7" stroke-width="10.2"/>
<path d="M1698.4 92.7 L1694.3 24.2 L1706.4 12.1 L1738.7 4.0" stroke-width="10.2"/>
<path d="M1734.7 100.8 L1762.9 121.0 L1787.1 141.1" stroke-width="10.2"/>
<path d="M1758.8 125.0 L1746.8 173.4" stroke-width="10.2"/>
<path d="M1779.0 133.1 L1779.0 149.2" stroke-width="10.2"/>
<path d="M1827.4 28.2 L1847.6 40.3 L1843.5 72.6 L1803.2 116.9" stroke-width="10.2"/>
<path d="M1795.1 48.4 L1799.2 60.5" stroke-width="10.2"/>
<path d="M2083.0 133.1 L2029.0 185.5 L1964.5 213.7 L1936.3 237.9 L1924.2 262.1 L1928.2 306.4 L1940.3 342.7 L1938.3 450.0" stroke-width="13.2"/>
<path d="M1883.8 133.1 L1956.4 161.3 L1980.6 193.5" stroke-width="10.2"/>
<path d="M1940.3 298.4 L1996.7 294.3 L2025.0 302.4 L2004.8 330.6 L2029.0 354.8" stroke-width="10.2"/>
<path d="M2053.2 246.0 L2083.0 237.9" stroke-width="10.2"/>
<path d="M2061.2 282.2 L2083.0 314.5" stroke-width="10.2"/>
<path d="M1589.5 403.2 L1641.9 358.8" stroke-width="10.2"/>
<path d="M1641.9 423.4 L1718.5 387.1 L1734.7 411.3 L1682.2 450.0" stroke-width="10.2"/>
<path d="M1803.2 450.0 L1883.8 403.2 L1895.9 322.6 L1936.3 310.5" stroke-width="10.2"/>
<path d="M1936.3 342.7 L1980.6 346.8 L2029.0 403.2 L2083.0 407.2" stroke-width="10.2"/>
<path d="M1863.7 427.4 L1895.9 450.0" stroke-width="10.2"/>
<path d="M1972.5 298.4 L1976.6 318.5 L2004.8 330.6" stroke-width="10.2"/>
<path d="M1980.6 346.8 L1996.7 403.2 L2083.0 443.5" stroke-width="10.2"/>
<path d="M258.0 450.0 L282.2 530.6 L290.3 591.1 L298.4 772.6 L274.2 796.8 L278.2 837.1 L306.4 853.2 L403.2 861.3 L443.5 837.1" stroke-width="12.2"/>
<path d="M137.1 550.8 L282.2 532.7 L435.5 516.5" stroke-width="10.2"/>
<path d="M141.1 587.1 L237.9 575.0" stroke-width="10.2"/>
<path d="M145.2 627.4 L241.9 611.3" stroke-width="10.2"/>
<path d="M121.0 635.5 L145.2 629.4" stroke-width="10.2"/>
<path d="M149.2 669.7 L246.0 651.6 L290.3 591.1" stroke-width="10.2"/>
<path d="M129.0 530.6 L149.2 669.7" stroke-width="10.2"/>
<path d="M237.9 542.7 L258.0 675.8" stroke-width="10.2"/>
<path d="M153.2 450.0 L161.3 470.2 L250.0 466.1" stroke-width="10.2"/>
<path d="M0.0 458.1 L24.2 474.2 L20.2 498.4" stroke-width="10.2"/>
<path d="M0.0 542.7 L24.2 566.9 L72.6 562.9" stroke-width="10.2"/>
<path d="M60.5 571.0 L56.4 587.1" stroke-width="10.2"/>
<path d="M0.0 635.5 L40.3 647.6 L121.0 659.7 L129.0 683.9 L258.0 679.8" stroke-width="10.2"/>
<path d="M24.2 566.9 L16.1 631.4" stroke-width="10.2"/>
<path d="M0.0 679.8 L40.3 691.9" stroke-width="10.2"/>
<path d="M40.3 647.6 L36.3 691.9" stroke-width="10.2"/>
<path d="M84.7 691.9 L52.4 772.6 L0.0 853.2" stroke-width="10.2"/>
<path d="M129.0 683.9 L104.8 812.9 L100.8 853.2" stroke-width="10.2"/>
<path d="M205.6 691.9 L189.5 772.6 L217.7 784.7" stroke-width="10.2"/>
<path d="M129.0 691.9 L205.6 704.0" stroke-width="10.2"/>
<path d="M121.0 724.2 L197.6 738.3" stroke-width="10.2"/>
<path d="M64.5 740.3 L189.5 760.5" stroke-width="10.2"/>
<path d="M52.4 772.6 L137.1 788.7" stroke-width="10.2"/>
<path d="M24.2 812.9 L137.1 816.9" stroke-width="10.2"/>
<path d="M181.4 808.8 L209.7 808.8" stroke-width="10.2"/>
<path d="M189.5 772.6 L181.4 853.2 L189.5 900.0" stroke-width="10.2"/>
<path d="M0.0 853.2 L24.2 812.9" stroke-width="10.2"/>
<path d="M92.7 833.0 L153.2 845.1 L161.3 900.0" stroke-width="10.2"/>
<path d="M298.4 631.4 L334.7 629.4" stroke-width="10.2"/>
<path d="M300.4 693.9 L324.6 693.9" stroke-width="10.2"/>
<path d="M266.1 728.2 L298.4 728.2" stroke-width="10.2"/>
<path d="M241.9 837.1 L278.2 837.1" stroke-width="10.2"/>
<path d="M246.0 861.3 L282.2 861.3" stroke-width="10.2"/>
<path d="M330.6 820.9 L334.7 857.2" stroke-width="10.2"/>
<path d="M278.2 820.9 L314.5 820.9" stroke-width="10.2"/>
<path d="M290.3 591.1 L342.7 587.1 L387.1 595.2 L403.2 667.7 L427.4 679.8 L483.8 700.0 L536.3 712.1 L629.0 716.1" stroke-width="10.2"/>
<path d="M330.6 530.6 L338.7 583.1" stroke-width="10.2"/>
<path d="M338.7 554.8 L435.5 542.7" stroke-width="10.2"/>
<path d="M338.7 583.1 L443.5 566.9" stroke-width="10.2"/>
<path d="M435.5 516.5 L447.6 571.0 L487.9 627.4" stroke-width="10.2"/>
<path d="M399.2 611.3 L467.7 603.2" stroke-width="10.2"/>
<path d="M403.2 635.5 L459.6 627.4" stroke-width="10.2"/>
<path d="M467.7 603.2 L443.5 667.7" stroke-width="10.2"/>
<path d="M407.2 659.7 L451.6 655.6" stroke-width="10.2"/>
<path d="M375.0 627.4 L395.1 629.4" stroke-width="10.2"/>
<path d="M383.0 647.6 L399.2 647.6" stroke-width="10.2"/>
<path d="M358.8 679.8 L403.2 669.7" stroke-width="10.2"/>
<path d="M419.3 683.9 L421.3 712.1" stroke-width="10.2"/>
<path d="M314.5 450.0 L322.6 474.2" stroke-width="10.2"/>
<path d="M322.6 474.2 L362.9 462.1 L383.0 474.2 L403.2 470.2" stroke-width="10.2"/>
<path d="M524.2 450.0 L544.3 498.4 L564.5 571.0 L604.8 595.2 L700.0 611.3" stroke-width="10.2"/>
<path d="M572.5 466.1 L576.6 478.2 L637.1 482.3 L641.1 506.4 L653.2 510.5" stroke-width="10.2"/>
<path d="M645.1 450.0 L637.1 482.3" stroke-width="10.2"/>
<path d="M483.8 671.8 L536.3 683.9" stroke-width="10.2"/>
<path d="M532.2 708.0 L528.2 732.2 L604.8 748.4" stroke-width="10.2"/>
<path d="M572.5 716.1 L568.5 740.3" stroke-width="10.2"/>
<path d="M419.3 752.4 L423.4 804.8 L443.5 837.1 L455.6 877.4 L455.6 900.0" stroke-width="10.2"/>
<path d="M447.6 756.4 L451.6 804.8" stroke-width="10.2"/>
<path d="M475.8 738.3 L477.8 837.1" stroke-width="10.2"/>
<path d="M423.4 804.8 L524.2 792.7 L528.2 772.6" stroke-width="10.2"/>
<path d="M504.0 768.5 L504.0 792.7" stroke-width="10.2"/>
<path d="M443.5 837.1 L564.5 845.1 L580.6 796.8 L700.0 788.7" stroke-width="10.2"/>
<path d="M564.5 845.1 L604.8 853.2 L645.1 900.0" stroke-width="10.2"/>
<path d="M625.0 829.0 L669.3 825.0" stroke-width="10.2"/>
<path d="M596.7 861.3 L600.8 900.0" stroke-width="10.2"/>
<path d="M685.4 833.0 L685.4 853.2" stroke-width="10.2"/>
<path d="M893.5 450.0 L889.5 510.5 L893.5 651.6 L877.4 675.8" stroke-width="10.2"/>
<path d="M845.2 486.3 L889.5 502.4 L962.1 518.5 L1006.4 526.6" stroke-width="10.2"/>
<path d="M958.0 450.0 L990.3 502.4 L1006.4 526.6 L1010.5 583.1" stroke-width="10.2"/>
<path d="M966.1 530.6 L950.0 583.1 L933.9 667.7" stroke-width="10.2"/>
<path d="M833.1 562.9 L901.6 579.0" stroke-width="10.2"/>
<path d="M792.7 591.1 L804.8 595.2" stroke-width="10.2"/>
<path d="M1042.7 458.1 L1131.4 454.0 L1135.5 474.2" stroke-width="10.2"/>
<path d="M1062.9 466.1 L1050.8 502.4" stroke-width="10.2"/>
<path d="M1135.5 474.2 L1103.2 514.5" stroke-width="10.2"/>
<path d="M1006.4 526.6 L1050.8 502.4" stroke-width="10.2"/>
<path d="M1066.9 538.7 L1064.9 611.3 L1079.0 667.7 L1087.1 732.2" stroke-width="10.2"/>
<path d="M1010.5 579.0 L1038.7 581.0" stroke-width="10.2"/>
<path d="M893.5 651.6 L982.2 691.9 L1042.7 716.1 L1079.0 728.2 L1143.5 724.2 L1143.5 704.0" stroke-width="10.2"/>
<path d="M954.0 667.7 L974.2 691.9" stroke-width="10.2"/>
<path d="M1099.2 667.7 L1111.3 732.2" stroke-width="10.2"/>
<path d="M1062.9 683.9 L1075.0 716.1" stroke-width="10.2"/>
<path d="M1018.5 679.8 L1042.7 679.8" stroke-width="10.2"/>
<path d="M881.4 708.0 L925.8 712.1 L917.7 744.3 L873.4 740.3 L881.4 708.0" stroke-width="10.2"/>
<path d="M873.4 740.3 L861.3 772.6" stroke-width="10.2"/>
<path d="M933.9 667.7 L941.9 724.2 L970.1 728.2" stroke-width="10.2"/>
<path d="M941.9 724.2 L946.0 756.4 L925.8 784.7" stroke-width="10.2"/>
<path d="M792.7 675.8 L829.0 687.9 L821.0 704.0 L780.6 708.0" stroke-width="10.2"/>
<path d="M752.4 764.5 L861.3 776.6 L881.4 780.6" stroke-width="10.2"/>
<path d="M889.5 768.5 L881.4 780.6" stroke-width="10.2"/>
<path d="M917.7 784.7 L950.0 784.7" stroke-width="10.2"/>
<path d="M998.4 708.0 L982.2 784.7 L958.0 837.1 L941.9 877.4 L925.8 900.0" stroke-width="10.2"/>
<path d="M1042.7 716.1 L1026.6 780.6 L1042.7 784.7 L1040.7 808.8" stroke-width="10.2"/>
<path d="M982.2 784.7 L1042.7 784.7" stroke-width="10.2"/>
<path d="M966.1 808.8 L1038.7 804.8" stroke-width="10.2"/>
<path d="M958.0 837.1 L1111.3 853.2" stroke-width="10.2"/>
<path d="M1099.2 829.0 L1099.2 853.2" stroke-width="10.2"/>
<path d="M1062.9 853.2 L1060.9 877.4" stroke-width="10.2"/>
<path d="M744.4 792.7 L780.6 804.8" stroke-width="10.2"/>
<path d="M792.7 877.4 L861.3 837.1 L901.6 804.8 L893.5 837.1 L901.6 877.4" stroke-width="10.2"/>
<path d="M861.3 837.1 L877.4 900.0" stroke-width="10.2"/>
<path d="M821.0 865.3 L901.6 877.4 L941.9 877.4" stroke-width="10.2"/>
<path d="M925.8 812.9 L917.7 869.3" stroke-width="10.2"/>
<path d="M700.0 466.1 L744.4 474.2" stroke-width="10.2"/>
<path d="M700.0 583.1 L764.5 603.2" stroke-width="10.2"/>
<path d="M700.0 627.4 L724.2 631.4" stroke-width="10.2"/>
<path d="M708.1 796.8 L740.3 800.8" stroke-width="10.2"/>
<path d="M700.0 853.2 L740.3 857.2" stroke-width="10.2"/>
<path d="M1400.0 498.4 L1304.8 510.5 L1264.5 562.9 L1204.0 583.1 L1208.0 603.2" stroke-width="11.2"/>
<path d="M1187.9 566.9 L1191.9 550.8 L1264.5 554.8 L1292.7 571.0 L1329.0 623.4 L1329.0 643.5" stroke-width="10.2"/>
<path d="M1212.1 595.2 L1284.6 583.1" stroke-width="10.2"/>
<path d="M1224.2 619.3 L1304.8 603.2" stroke-width="10.2"/>
<path d="M1264.5 635.5 L1320.9 623.4" stroke-width="10.2"/>
<path d="M1296.7 518.5 L1329.0 571.0 L1361.2 595.2" stroke-width="10.2"/>
<path d="M1341.1 518.5 L1365.3 566.9" stroke-width="10.2"/>
<path d="M1377.4 510.5 L1400.0 546.8" stroke-width="10.2"/>
<path d="M1264.5 708.0 L1400.0 691.9" stroke-width="10.2"/>
<path d="M1260.4 732.2 L1284.6 812.9 L1264.5 837.1 L1304.8 900.0" stroke-width="10.2"/>
<path d="M1256.4 837.1 L1320.9 812.9 L1369.3 825.0" stroke-width="10.2"/>
<path d="M1280.6 804.8 L1296.7 800.8" stroke-width="10.2"/>
<path d="M1264.5 853.2 L1329.0 829.0" stroke-width="10.2"/>
<path d="M1272.5 877.4 L1345.1 853.2" stroke-width="10.2"/>
<path d="M1369.3 772.6 L1400.0 812.9" stroke-width="10.2"/>
<path d="M1329.0 853.2 L1365.3 900.0" stroke-width="10.2"/>
<path d="M1609.7 450.0 L1601.6 490.3 L1569.3 542.7 L1521.0 579.0 L1452.4 631.4 L1448.4 691.9 L1456.4 772.6 L1480.6 853.2 L1504.8 900.0" stroke-width="13.2"/>
<path d="M1400.0 482.3 L1440.3 474.2 L1500.8 486.3 L1533.1 450.0" stroke-width="11.2"/>
<path d="M1400.0 530.6 L1452.4 583.1" stroke-width="10.2"/>
<path d="M1561.3 554.8 L1440.3 639.5" stroke-width="11.2"/>
<path d="M1400.0 502.4 L1424.2 490.3" stroke-width="10.2"/>
<path d="M1412.1 542.7 L1444.4 518.5 L1480.6 550.8" stroke-width="10.2"/>
<path d="M1460.5 502.4 L1516.9 538.7" stroke-width="10.2"/>
<path d="M1452.4 691.9 L1569.3 708.0" stroke-width="10.2"/>
<path d="M1504.8 659.7 L1573.4 663.7" stroke-width="10.2"/>
<path d="M1500.8 732.2 L1569.3 736.3" stroke-width="10.2"/>
<path d="M1504.8 764.5 L1533.1 768.5" stroke-width="10.2"/>
<path d="M1500.8 651.6 L1496.8 853.2" stroke-width="10.2"/>
<path d="M1577.4 643.5 L1573.4 732.2 L1589.5 833.0 L1601.6 900.0" stroke-width="11.2"/>
<path d="M1609.7 603.2 L1577.4 643.5" stroke-width="10.2"/>
<path d="M1545.2 627.4 L1617.7 611.3" stroke-width="10.2"/>
<path d="M1400.0 687.9 L1452.4 691.9" stroke-width="10.2"/>
<path d="M1400.0 812.9 L1448.4 837.1 L1480.6 900.0" stroke-width="10.2"/>
<path d="M1521.0 804.8 L1553.2 812.9 L1537.1 853.2 L1504.8 837.1" stroke-width="10.2"/>
<path d="M1682.2 510.5 L1762.9 450.0" stroke-width="9.2"/>
<path d="M1779.0 530.6 L1895.9 450.0" stroke-width="9.2"/>
<path d="M1787.1 571.0 L1916.1 474.2" stroke-width="9.2"/>
<path d="M1827.4 575.0 L1920.1 510.5" stroke-width="9.2"/>
<path d="M1625.8 514.5 L1706.4 450.0" stroke-width="9.2"/>
<path d="M1658.0 450.0 L1787.1 566.9" stroke-width="9.2"/>
<path d="M1762.9 522.6 L1795.1 554.8" stroke-width="9.2"/>
<path d="M1803.2 450.0 L1875.8 510.5" stroke-width="9.2"/>
<path d="M1851.6 450.0 L1904.0 490.3" stroke-width="9.2"/>
<path d="M1609.7 474.2 L1706.4 478.2" stroke-width="10.2"/>
<path d="M1641.9 450.0 L1646.0 474.2" stroke-width="10.2"/>
<path d="M1770.9 550.8 L1766.9 675.8 L1754.8 792.7" stroke-width="10.2"/>
<path d="M1734.7 542.7 L1738.7 623.4" stroke-width="10.2"/>
<path d="M1712.5 591.1 L1714.5 619.3" stroke-width="10.2"/>
<path d="M1702.4 623.4 L1908.0 627.4" stroke-width="10.2"/>
<path d="M1775.0 583.1 L2083.0 587.1" stroke-width="10.2"/>
<path d="M1646.0 651.6 L1904.0 667.7 L2029.0 679.8 L2037.1 708.0" stroke-width="10.2"/>
<path d="M1938.3 450.0 L1924.2 571.0 L1912.1 675.8 L1900.0 812.9 L1895.9 900.0" stroke-width="13.2"/>
<path d="M1940.3 502.4 L2083.0 506.4" stroke-width="10.2"/>
<path d="M1936.3 542.7 L2083.0 546.8" stroke-width="10.2"/>
<path d="M1920.1 639.5 L2012.9 643.5 L2029.0 679.8" stroke-width="10.2"/>
<path d="M1916.1 716.1 L1984.6 720.1" stroke-width="10.2"/>
<path d="M1904.0 784.7 L1936.3 782.6" stroke-width="10.2"/>
<path d="M1956.4 450.0 L1972.5 502.4" stroke-width="10.2"/>
<path d="M2029.0 450.0 L2083.0 502.4" stroke-width="10.2"/>
<path d="M1787.1 683.9 L1783.0 792.7" stroke-width="9.2"/>
<path d="M1795.1 704.0 L1883.8 706.0 L1879.8 756.4" stroke-width="9.2"/>
<path d="M1787.1 732.2 L1867.7 732.2" stroke-width="9.2"/>
<path d="M1779.0 764.5 L1871.7 760.5" stroke-width="9.2"/>
<path d="M1714.5 804.8 L1867.7 792.7 L1867.7 853.2" stroke-width="9.2"/>
<path d="M1742.7 865.3 L1924.2 869.3" stroke-width="9.2"/>
<path d="M1641.9 683.9 L1637.9 804.8 L1686.3 808.8" stroke-width="9.2"/>
<path d="M1650.0 691.9 L1734.7 696.0 L1730.6 788.7" stroke-width="9.2"/>
<path d="M1650.0 712.1 L1730.6 716.1" stroke-width="9.2"/>
<path d="M700.0 8.1 L728.2 28.2 L780.6 56.4" stroke-width="10.2"/>
<path d="M700.0 36.3 L724.2 52.4 L764.5 76.6" stroke-width="10.2"/>
<path d="M700.0 68.5 L732.3 88.7 L756.4 100.8" stroke-width="10.2"/>
<path d="M1329.0 133.1 L1400.0 141.1" stroke-width="10.2"/>
<path d="M1337.1 104.8 L1341.1 133.1" stroke-width="10.2"/>
<path d="M1385.4 40.3 L1400.0 44.4" stroke-width="10.2"/>
<path d="M1320.9 24.2 L1400.0 16.1" stroke-width="10.2"/>
<path d="M1163.7 354.8 L1155.6 450.0" stroke-width="10.2"/>
<path d="M1070.9 354.8 L1111.3 362.9" stroke-width="10.2"/>
<path d="M1030.6 403.2 L1022.6 450.0" stroke-width="10.2"/>
<path d="M1200.0 282.2 L1264.5 298.4" stroke-width="10.2"/>
<path d="M1224.2 362.9 L1304.8 379.0 L1312.9 450.0" stroke-width="10.2"/>
<path d="M1345.1 346.8 L1400.0 354.8" stroke-width="10.2"/>
<path d="M1365.3 282.2 L1400.0 290.3" stroke-width="10.2"/>
<path d="M925.8 225.8 L933.9 250.0" stroke-width="10.2"/>
<path d="M941.9 193.5 L937.9 225.8" stroke-width="10.2"/>
<path d="M982.2 92.7 L990.3 149.2" stroke-width="10.2"/>
<path d="M1014.5 153.2 L1006.4 189.5" stroke-width="10.2"/>
<path d="M1042.7 161.3 L1042.7 201.6" stroke-width="10.2"/>
<path d="M869.3 133.1 L873.4 173.4 L837.1 189.5 L833.1 209.7" stroke-width="10.2"/>
<path d="M724.2 298.4 L716.1 346.8" stroke-width="10.2"/>
<path d="M780.6 241.9 L776.6 354.8" stroke-width="10.2"/>
<path d="M881.4 334.7 L909.7 350.8" stroke-width="10.2"/>
<path d="M1940.3 298.4 L2083.0 310.5" stroke-width="10.2"/>
<path d="M1996.7 334.7 L2045.1 403.2" stroke-width="10.2"/>
<path d="M2029.0 354.8 L2083.0 362.9" stroke-width="10.2"/>
<path d="M1964.5 362.9 L1996.7 403.2" stroke-width="10.2"/>
<path d="M1940.3 387.1 L1980.6 450.0" stroke-width="10.2"/>
<path d="M2029.0 403.2 L2045.1 450.0" stroke-width="10.2"/>
<path d="M2053.2 314.5 L2069.3 354.8" stroke-width="10.2"/>
<path d="M1843.5 450.0 L1900.0 407.2" stroke-width="10.2"/>
<path d="M1650.0 450.0 L1682.2 427.4" stroke-width="10.2"/>
<path d="M1746.8 450.0 L1762.9 427.4 L1734.7 411.3" stroke-width="10.2"/>
<path d="M2083.0 100.8 L2065.3 129.0" stroke-width="10.2"/>
<path d="M2069.3 250.0 L2083.0 258.0" stroke-width="10.2"/>
<path d="M1452.4 0.0 L1448.4 24.2" stroke-width="10.2"/>
<path d="M1492.7 24.2 L1504.8 60.5" stroke-width="10.2"/>
<path d="M1400.0 36.3 L1424.2 38.3" stroke-width="10.2"/>
<path d="M1533.1 0.0 L1537.1 48.4 L1577.4 52.4" stroke-width="10.2"/>
<path d="M1468.5 250.0 L1472.6 282.2" stroke-width="10.2"/>
<path d="M1400.0 241.9 L1424.2 246.0" stroke-width="10.2"/>
<path d="M1468.5 322.6 L1470.6 354.8" stroke-width="10.2"/>
<path d="M1143.5 732.2 L1204.0 756.4" stroke-width="10.2"/>
<path d="M1103.2 514.5 L1119.3 546.8" stroke-width="10.2"/>
<path d="M925.8 571.0 L966.1 583.1" stroke-width="10.2"/>
<path d="M901.6 611.3 L950.0 619.3" stroke-width="10.2"/>
<path d="M982.2 611.3 L1006.4 627.4 L1010.5 583.1" stroke-width="10.2"/>
<path d="M1123.4 812.9 L1143.5 853.2 L1135.5 900.0" stroke-width="10.2"/>
<path d="M982.2 853.2 L990.3 900.0" stroke-width="10.2"/>
<path d="M1022.6 853.2 L1038.7 900.0" stroke-width="10.2"/>
<path d="M800.8 812.9 L841.1 829.0" stroke-width="10.2"/>
<path d="M800.8 732.2 L853.2 740.3" stroke-width="10.2"/>
<path d="M1329.0 643.5 L1400.0 635.5" stroke-width="10.2"/>
<path d="M1345.1 675.8 L1400.0 667.7" stroke-width="10.2"/>
<path d="M1272.5 756.4 L1345.1 748.4 L1400.0 756.4" stroke-width="10.2"/>
<path d="M1292.7 784.7 L1361.2 772.6" stroke-width="10.2"/>
<path d="M1353.2 869.3 L1400.0 853.2" stroke-width="10.2"/>
<path d="M1304.8 732.2 L1312.9 756.4" stroke-width="10.2"/>
<path d="M1236.3 526.6 L1204.0 554.8" stroke-width="10.2"/>
<path d="M1353.2 490.3 L1400.0 474.2" stroke-width="10.2"/>
<path d="M1754.8 474.2 L1827.4 534.7" stroke-width="9.2"/>
<path d="M1706.4 502.4 L1762.9 550.8" stroke-width="9.2"/>
<path d="M1875.8 510.5 L1920.1 546.8" stroke-width="9.2"/>
<path d="M1730.6 450.0 L1803.2 510.5" stroke-width="9.2"/>
<path d="M1835.5 490.3 L1883.8 530.6" stroke-width="9.2"/>
<path d="M1722.6 530.6 L1811.3 462.1" stroke-width="9.2"/>
<path d="M1650.0 494.4 L1698.4 458.1" stroke-width="9.2"/>
<path d="M1843.5 554.8 L1924.2 494.4" stroke-width="9.2"/>
<path d="M1400.0 583.1 L1424.2 603.2 L1452.4 631.4" stroke-width="10.2"/>
<path d="M1480.6 510.5 L1533.1 546.8" stroke-width="10.2"/>
<path d="M1424.2 550.8 L1472.6 583.1" stroke-width="10.2"/>
<path d="M1400.0 611.3 L1420.2 627.4" stroke-width="10.2"/>
<path d="M1492.7 583.1 L1533.1 611.3" stroke-width="10.2"/>
<path d="M1460.5 611.3 L1488.7 631.4" stroke-width="10.2"/>
<path d="M1452.4 732.2 L1500.8 736.3" stroke-width="10.2"/>
<path d="M1456.4 772.6 L1500.8 776.6" stroke-width="10.2"/>
<path d="M1400.0 732.2 L1448.4 740.3" stroke-width="10.2"/>
<path d="M1400.0 772.6 L1452.4 784.7" stroke-width="10.2"/>
<path d="M1500.8 800.8 L1577.4 804.8" stroke-width="10.2"/>
<path d="M1521.0 853.2 L1589.5 857.2" stroke-width="10.2"/>
<path d="M1424.2 853.2 L1440.3 900.0" stroke-width="10.2"/>
<path d="M1940.3 611.3 L2083.0 615.3" stroke-width="10.2"/>
<path d="M1920.1 675.8 L2083.0 683.9" stroke-width="10.2"/>
<path d="M1984.6 720.1 L1988.7 812.9" stroke-width="10.2"/>
<path d="M1908.0 752.4 L1984.6 756.4" stroke-width="10.2"/>
<path d="M1904.0 833.0 L1984.6 837.1" stroke-width="10.2"/>
<path d="M1976.6 546.8 L1980.6 587.1" stroke-width="10.2"/>
<path d="M2029.0 506.4 L2033.0 546.8" stroke-width="10.2"/>
<path d="M1807.2 812.9 L1811.3 865.3" stroke-width="9.2"/>
<path d="M1754.8 825.0 L1758.8 865.3" stroke-width="9.2"/>
<path d="M1835.5 796.8 L1839.5 829.0 L1867.7 829.0" stroke-width="9.2"/>
<path d="M1617.7 853.2 L1722.6 857.2" stroke-width="9.2"/>
<path d="M1650.0 877.4 L1746.8 885.5" stroke-width="9.2"/>
<path d="M1641.9 583.1 L1706.4 587.1" stroke-width="9.2"/>
<path d="M1625.8 550.8 L1682.2 554.8 L1686.3 623.4" stroke-width="9.2"/>
<path d="M1617.7 611.3 L1641.9 651.6" stroke-width="9.2"/>
<path d="M334.7 732.2 L395.1 740.3" stroke-width="10.2"/>
<path d="M346.8 772.6 L419.3 764.5" stroke-width="10.2"/>
<path d="M354.8 700.0 L362.9 732.2" stroke-width="10.2"/>
<path d="M495.9 530.6 L524.2 583.1" stroke-width="10.2"/>
<path d="M483.8 490.3 L544.3 498.4" stroke-width="10.2"/>
<path d="M443.5 450.0 L451.6 490.3" stroke-width="10.2"/>
<path d="M383.0 474.2 L387.1 514.5" stroke-width="10.2"/>
<path d="M645.1 651.6 L700.0 659.7" stroke-width="10.2"/>
<path d="M629.0 716.1 L645.1 756.4" stroke-width="10.2"/>
<path d="M500.0 853.2 L504.0 900.0" stroke-width="10.2"/>
<path d="M536.3 869.3 L596.7 877.4" stroke-width="10.2"/>
<path d="M362.9 865.3 L366.9 900.0" stroke-width="10.2"/>
<path d="M0.0 498.4 L20.2 498.4" stroke-width="10.2"/>
<path d="M72.6 490.3 L76.6 562.9" stroke-width="10.2"/>
<path d="M40.3 530.6 L72.6 526.6" stroke-width="10.2"/>
<path d="M80.6 611.3 L121.0 611.3" stroke-width="10.2"/>
<path d="M0.0 732.2 L40.3 740.3 L52.4 772.6" stroke-width="10.2"/>
<path d="M16.1 788.7 L44.4 792.7" stroke-width="10.2"/>
<path d="M241.9 100.8 L282.2 133.1 L334.7 185.5" stroke-width="10.2"/>
<path d="M225.8 24.2 L203.6 100.8" stroke-width="10.2"/>
<path d="M504.0 121.0 L536.3 258.0" stroke-width="10.2"/>
<path d="M455.6 92.7 L504.0 121.0" stroke-width="10.2"/>
<path d="M483.8 169.3 L524.2 189.5" stroke-width="10.2"/>
<path d="M0.0 282.2 L44.4 294.3" stroke-width="10.2"/>
<path d="M0.0 346.8 L36.3 354.8" stroke-width="10.2"/>
<path d="M346.8 354.8 L403.2 403.2 L459.6 393.1" stroke-width="10.2"/>
<path d="M564.5 403.2 L604.8 450.0" stroke-width="10.2"/>
<path d="M403.2 415.3 L423.4 450.0" stroke-width="10.2"/>
<path d="M169.3 379.0 L217.7 387.1" stroke-width="10.2"/>
<path d="M92.7 450.0 L104.8 403.2 L161.3 387.1" stroke-width="10.2"/>
</g><g stroke="#fff">
<path d="M0.0 193.5 L80.6 203.6 L177.4 219.7 L282.2 254.0 L362.9 282.2 L443.5 306.4 L524.2 330.6 L604.8 354.8 L700.0 375.0" stroke-width="14.5"/>
<path d="M700.0 375.0 L780.6 387.9 L849.2 395.9" stroke-width="14.5"/>
<path d="M849.2 395.9 L893.5 362.9 L941.9 306.4 L982.2 262.1 L1022.6 225.8 L1062.9 209.7 L1123.4 193.5 L1163.7 189.5 L1224.2 209.7 L1284.6 233.9 L1345.1 233.0 L1400.0 211.7" stroke-width="14.5"/>
<path d="M1400.0 211.7 L1480.6 183.5 L1577.4 167.3 L1641.9 141.1 L1722.6 96.8 L1783.0 52.4 L1843.5 20.2 L1924.2 4.0 L1984.6 -4.0" stroke-width="14.5"/>
<path d="M849.2 395.9 L841.1 450.0" stroke-width="12.5"/>
<path d="M841.1 450.0 L829.0 510.5 L812.9 591.1 L780.6 671.8 L752.4 732.2 L744.4 792.7 L744.4 900.0" stroke-width="12.5"/>
<path d="M483.8 0.0 L475.8 48.4 L455.6 92.7 L415.3 137.1 L383.0 161.3 L334.7 185.5 L318.5 241.9 L282.2 282.2 L266.1 306.4" stroke-width="8"/>
<path d="M203.6 100.8 L189.5 161.3 L179.4 217.7" stroke-width="7"/>
<path d="M358.8 96.8 L455.6 12.1" stroke-width="6"/>
<path d="M387.1 133.1 L471.7 60.5" stroke-width="6"/>
<path d="M338.7 68.5 L415.3 0.0" stroke-width="6"/>
<path d="M362.9 12.1 L435.5 76.6" stroke-width="6"/>
<path d="M387.1 0.0 L459.6 52.4" stroke-width="6"/>
<path d="M350.8 44.4 L419.3 108.9" stroke-width="6"/>
<path d="M342.7 76.6 L399.2 133.1" stroke-width="6"/>
<path d="M346.8 0.0 L306.4 12.1 L250.0 20.2" stroke-width="7"/>
<path d="M40.3 100.8 L56.4 169.3 L64.5 197.6" stroke-width="7"/>
<path d="M0.0 48.4 L24.2 54.4" stroke-width="7"/>
<path d="M96.8 161.3 L121.0 201.6" stroke-width="7"/>
<path d="M121.0 116.9 L96.8 161.3" stroke-width="7"/>
<path d="M0.0 169.3 L24.2 121.0 L44.4 92.7 L56.4 40.3 L64.5 0.0" stroke-width="7"/>
<path d="M0.0 133.1 L40.3 139.1" stroke-width="7"/>
<path d="M0.0 72.6 L20.2 74.6" stroke-width="7"/>
<path d="M133.1 258.0 L137.1 314.5 L161.3 342.7 L241.9 362.9 L254.0 375.0 L262.1 403.2 L258.0 450.0" stroke-width="8"/>
<path d="M48.4 209.7 L80.6 282.2 L40.3 403.2 L24.2 450.0" stroke-width="7"/>
<path d="M80.6 322.6 L40.3 314.5" stroke-width="6"/>
<path d="M52.4 366.9 L24.2 362.9" stroke-width="6"/>
<path d="M64.5 411.3 L32.3 403.2" stroke-width="6"/>
<path d="M419.3 314.5 L403.2 362.9" stroke-width="7"/>
<path d="M375.0 306.4 L362.9 346.8" stroke-width="7"/>
<path d="M524.2 334.7 L512.1 403.2 L520.1 450.0" stroke-width="7"/>
<path d="M459.6 393.1 L512.1 403.2" stroke-width="7"/>
<path d="M661.2 375.0 L645.1 450.0" stroke-width="7"/>
<path d="M306.4 403.2 L322.6 450.0" stroke-width="7"/>
<path d="M209.7 403.2 L217.7 450.0" stroke-width="7"/>
<path d="M161.3 443.5 L209.7 435.5" stroke-width="6"/>
<path d="M560.4 193.5 L564.5 133.1 L592.7 116.9 L637.1 108.9 L700.0 133.1" stroke-width="6"/>
<path d="M645.1 96.8 L649.2 60.5 L700.0 24.2" stroke-width="6"/>
<path d="M536.3 258.0 L560.4 193.5" stroke-width="6"/>
<path d="M584.6 0.0 L629.0 68.5 L645.1 96.8" stroke-width="6"/>
<path d="M612.9 121.0 L604.8 169.3 L629.0 189.5" stroke-width="6"/>
<path d="M700.0 189.5 L685.4 209.7" stroke-width="6"/>
<path d="M1167.7 0.0 L1143.5 68.5 L1111.3 96.8 L1103.2 145.2 L1119.3 185.5" stroke-width="7"/>
<path d="M1054.8 0.0 L1054.8 64.5 L1111.3 96.8" stroke-width="7"/>
<path d="M1143.5 80.6 L1240.3 104.8 L1296.7 60.5 L1400.0 68.5" stroke-width="7"/>
<path d="M1127.4 125.0 L1224.2 149.2 L1272.5 137.1" stroke-width="7"/>
<path d="M1264.5 0.0 L1236.3 40.3 L1256.4 56.4 L1224.2 149.2 L1208.0 201.6" stroke-width="7"/>
<path d="M1288.7 0.0 L1272.5 48.4 L1256.4 185.5 L1248.4 217.7" stroke-width="7"/>
<path d="M1232.2 40.3 L1296.7 60.5" stroke-width="7"/>
<path d="M784.7 60.5 L796.8 100.8 L821.0 133.1 L893.5 133.1 L982.2 149.2 L1046.8 161.3 L1103.2 189.5" stroke-width="7"/>
<path d="M837.1 80.6 L982.2 92.7" stroke-width="7"/>
<path d="M837.1 80.6 L841.1 100.8" stroke-width="7"/>
<path d="M869.3 20.2 L925.8 36.3 L982.2 48.4" stroke-width="7"/>
<path d="M919.7 0.0 L919.7 161.3 L909.7 209.7" stroke-width="7"/>
<path d="M829.0 201.6 L885.5 209.7 L893.5 241.9 L941.9 258.0 L1006.4 282.2" stroke-width="7"/>
<path d="M804.8 250.0 L869.3 250.0 L869.3 298.4 L804.8 298.4 L804.8 250.0" stroke-width="7"/>
<path d="M804.8 274.2 L869.3 274.2" stroke-width="7"/>
<path d="M716.1 241.9 L720.2 282.2 L752.4 290.3" stroke-width="7"/>
<path d="M752.4 254.0 L748.4 346.8" stroke-width="7"/>
<path d="M700.0 258.0 L716.1 262.1" stroke-width="7"/>
<path d="M1107.2 193.5 L1103.2 282.2 L1079.0 362.9 L1070.9 450.0" stroke-width="7"/>
<path d="M1006.4 282.2 L1143.5 322.6 L1159.6 350.8 L1143.5 450.0" stroke-width="7"/>
<path d="M958.0 362.9 L1030.6 403.2 L1159.6 435.5" stroke-width="7"/>
<path d="M1175.8 225.8 L1179.8 266.1" stroke-width="7"/>
<path d="M1236.3 225.8 L1240.3 241.9" stroke-width="7"/>
<path d="M1038.7 229.8 L1038.7 246.0" stroke-width="7"/>
<path d="M1075.0 266.1 L1135.5 282.2 L1139.5 322.6" stroke-width="7"/>
<path d="M1284.6 237.9 L1280.6 282.2 L1272.5 322.6" stroke-width="7"/>
<path d="M1304.8 314.5 L1341.1 322.6" stroke-width="7"/>
<path d="M1329.0 419.3 L1400.0 411.3" stroke-width="7"/>
<path d="M1361.2 241.9 L1361.2 282.2 L1345.1 306.4" stroke-width="7"/>
<path d="M1329.0 80.6 L1345.1 80.6 L1349.2 96.8" stroke-width="7"/>
<path d="M1381.4 76.6 L1385.4 104.8" stroke-width="7"/>
<path d="M1280.6 189.5 L1329.0 193.5" stroke-width="7"/>
<path d="M700.0 24.2 L740.3 48.4 L784.7 60.5" stroke-width="7"/>
<path d="M700.0 121.0 L732.3 133.1" stroke-width="7"/>
<path d="M700.0 193.5 L724.2 189.5" stroke-width="7"/>
<path d="M893.5 362.9 L925.8 387.1 L982.2 411.3" stroke-width="7"/>
<path d="M998.4 282.2 L982.2 450.0" stroke-width="7"/>
<path d="M1103.2 330.6 L1107.2 362.9" stroke-width="7"/>
<path d="M1581.4 0.0 L1577.4 80.6 L1569.3 169.3 L1557.2 241.9 L1541.1 306.4 L1553.2 362.9 L1589.5 403.2 L1605.6 450.0" stroke-width="9"/>
<path d="M1400.0 76.6 L1480.6 84.7 L1577.4 94.8" stroke-width="7"/>
<path d="M1424.2 0.0 L1416.1 76.6 L1400.0 104.8" stroke-width="7"/>
<path d="M1472.6 20.2 L1468.5 80.6" stroke-width="7"/>
<path d="M1452.4 52.4 L1448.4 84.7" stroke-width="7"/>
<path d="M1500.8 64.5 L1504.8 84.7" stroke-width="7"/>
<path d="M1533.1 100.8 L1533.1 161.3" stroke-width="7"/>
<path d="M1424.2 209.7 L1440.3 322.6 L1436.3 450.0" stroke-width="7"/>
<path d="M1440.3 322.6 L1504.8 324.6" stroke-width="7"/>
<path d="M1440.3 354.8 L1496.8 356.8" stroke-width="7"/>
<path d="M1436.3 387.1 L1508.9 387.1 L1508.9 419.3 L1400.0 419.3" stroke-width="7"/>
<path d="M1440.3 290.3 L1468.5 290.3" stroke-width="7"/>
<path d="M1432.3 217.7 L1452.4 215.7" stroke-width="7"/>
<path d="M1440.3 237.9 L1480.6 241.9" stroke-width="7"/>
<path d="M1516.9 243.9 L1561.3 250.0" stroke-width="7"/>
<path d="M1573.4 201.6 L1605.6 209.7" stroke-width="7"/>
<path d="M1561.3 278.2 L1585.5 298.4 L1617.7 296.4" stroke-width="7"/>
<path d="M1593.5 52.4 L1629.8 52.4" stroke-width="7"/>
<path d="M1601.6 8.1 L1658.0 12.1 L1654.0 24.2 L1597.6 22.2" stroke-width="7"/>
<path d="M1641.9 96.8 L1637.9 133.1" stroke-width="7"/>
<path d="M1674.2 40.3 L1678.2 112.9" stroke-width="7"/>
<path d="M1654.0 145.2 L1664.1 177.4" stroke-width="7"/>
<path d="M1617.7 125.0 L1619.7 141.1" stroke-width="7"/>
<path d="M1762.9 0.0 L1746.8 60.5 L1734.7 92.7" stroke-width="7"/>
<path d="M1698.4 92.7 L1694.3 24.2 L1706.4 12.1 L1738.7 4.0" stroke-width="7"/>
<path d="M1734.7 100.8 L1762.9 121.0 L1787.1 141.1" stroke-width="7"/>
<path d="M1758.8 125.0 L1746.8 173.4" stroke-width="7"/>
<path d="M1779.0 133.1 L1779.0 149.2" stroke-width="7"/>
<path d="M1827.4 28.2 L1847.6 40.3 L1843.5 72.6 L1803.2 116.9" stroke-width="7"/>
<path d="M1795.1 48.4 L1799.2 60.5" stroke-width="7"/>
<path d="M2083.0 133.1 L2029.0 185.5 L1964.5 213.7 L1936.3 237.9 L1924.2 262.1 L1928.2 306.4 L1940.3 342.7 L1938.3 450.0" stroke-width="10"/>
<path d="M1883.8 133.1 L1956.4 161.3 L1980.6 193.5" stroke-width="7"/>
<path d="M1940.3 298.4 L1996.7 294.3 L2025.0 302.4 L2004.8 330.6 L2029.0 354.8" stroke-width="7"/>
<path d="M2053.2 246.0 L2083.0 237.9" stroke-width="7"/>
<path d="M2061.2 282.2 L2083.0 314.5" stroke-width="7"/>
<path d="M1589.5 403.2 L1641.9 358.8" stroke-width="7"/>
<path d="M1641.9 423.4 L1718.5 387.1 L1734.7 411.3 L1682.2 450.0" stroke-width="7"/>
<path d="M1803.2 450.0 L1883.8 403.2 L1895.9 322.6 L1936.3 310.5" stroke-width="7"/>
<path d="M1936.3 342.7 L1980.6 346.8 L2029.0 403.2 L2083.0 407.2" stroke-width="7"/>
<path d="M1863.7 427.4 L1895.9 450.0" stroke-width="7"/>
<path d="M1972.5 298.4 L1976.6 318.5 L2004.8 330.6" stroke-width="7"/>
<path d="M1980.6 346.8 L1996.7 403.2 L2083.0 443.5" stroke-width="7"/>
<path d="M258.0 450.0 L282.2 530.6 L290.3 591.1 L298.4 772.6 L274.2 796.8 L278.2 837.1 L306.4 853.2 L403.2 861.3 L443.5 837.1" stroke-width="9"/>
<path d="M137.1 550.8 L282.2 532.7 L435.5 516.5" stroke-width="7"/>
<path d="M141.1 587.1 L237.9 575.0" stroke-width="7"/>
<path d="M145.2 627.4 L241.9 611.3" stroke-width="7"/>
<path d="M121.0 635.5 L145.2 629.4" stroke-width="7"/>
<path d="M149.2 669.7 L246.0 651.6 L290.3 591.1" stroke-width="7"/>
<path d="M129.0 530.6 L149.2 669.7" stroke-width="7"/>
<path d="M237.9 542.7 L258.0 675.8" stroke-width="7"/>
<path d="M153.2 450.0 L161.3 470.2 L250.0 466.1" stroke-width="7"/>
<path d="M0.0 458.1 L24.2 474.2 L20.2 498.4" stroke-width="7"/>
<path d="M0.0 542.7 L24.2 566.9 L72.6 562.9" stroke-width="7"/>
<path d="M60.5 571.0 L56.4 587.1" stroke-width="7"/>
<path d="M0.0 635.5 L40.3 647.6 L121.0 659.7 L129.0 683.9 L258.0 679.8" stroke-width="7"/>
<path d="M24.2 566.9 L16.1 631.4" stroke-width="7"/>
<path d="M0.0 679.8 L40.3 691.9" stroke-width="7"/>
<path d="M40.3 647.6 L36.3 691.9" stroke-width="7"/>
<path d="M84.7 691.9 L52.4 772.6 L0.0 853.2" stroke-width="7"/>
<path d="M129.0 683.9 L104.8 812.9 L100.8 853.2" stroke-width="7"/>
<path d="M205.6 691.9 L189.5 772.6 L217.7 784.7" stroke-width="7"/>
<path d="M129.0 691.9 L205.6 704.0" stroke-width="7"/>
<path d="M121.0 724.2 L197.6 738.3" stroke-width="7"/>
<path d="M64.5 740.3 L189.5 760.5" stroke-width="7"/>
<path d="M52.4 772.6 L137.1 788.7" stroke-width="7"/>
<path d="M24.2 812.9 L137.1 816.9" stroke-width="7"/>
<path d="M181.4 808.8 L209.7 808.8" stroke-width="7"/>
<path d="M189.5 772.6 L181.4 853.2 L189.5 900.0" stroke-width="7"/>
<path d="M0.0 853.2 L24.2 812.9" stroke-width="7"/>
<path d="M92.7 833.0 L153.2 845.1 L161.3 900.0" stroke-width="7"/>
<path d="M298.4 631.4 L334.7 629.4" stroke-width="7"/>
<path d="M300.4 693.9 L324.6 693.9" stroke-width="7"/>
<path d="M266.1 728.2 L298.4 728.2" stroke-width="7"/>
<path d="M241.9 837.1 L278.2 837.1" stroke-width="7"/>
<path d="M246.0 861.3 L282.2 861.3" stroke-width="7"/>
<path d="M330.6 820.9 L334.7 857.2" stroke-width="7"/>
<path d="M278.2 820.9 L314.5 820.9" stroke-width="7"/>
<path d="M290.3 591.1 L342.7 587.1 L387.1 595.2 L403.2 667.7 L427.4 679.8 L483.8 700.0 L536.3 712.1 L629.0 716.1" stroke-width="7"/>
<path d="M330.6 530.6 L338.7 583.1" stroke-width="7"/>
<path d="M338.7 554.8 L435.5 542.7" stroke-width="7"/>
<path d="M338.7 583.1 L443.5 566.9" stroke-width="7"/>
<path d="M435.5 516.5 L447.6 571.0 L487.9 627.4" stroke-width="7"/>
<path d="M399.2 611.3 L467.7 603.2" stroke-width="7"/>
<path d="M403.2 635.5 L459.6 627.4" stroke-width="7"/>
<path d="M467.7 603.2 L443.5 667.7" stroke-width="7"/>
<path d="M407.2 659.7 L451.6 655.6" stroke-width="7"/>
<path d="M375.0 627.4 L395.1 629.4" stroke-width="7"/>
<path d="M383.0 647.6 L399.2 647.6" stroke-width="7"/>
<path d="M358.8 679.8 L403.2 669.7" stroke-width="7"/>
<path d="M419.3 683.9 L421.3 712.1" stroke-width="7"/>
<path d="M314.5 450.0 L322.6 474.2" stroke-width="7"/>
<path d="M322.6 474.2 L362.9 462.1 L383.0 474.2 L403.2 470.2" stroke-width="7"/>
<path d="M524.2 450.0 L544.3 498.4 L564.5 571.0 L604.8 595.2 L700.0 611.3" stroke-width="7"/>
<path d="M572.5 466.1 L576.6 478.2 L637.1 482.3 L641.1 506.4 L653.2 510.5" stroke-width="7"/>
<path d="M645.1 450.0 L637.1 482.3" stroke-width="7"/>
<path d="M483.8 671.8 L536.3 683.9" stroke-width="7"/>
<path d="M532.2 708.0 L528.2 732.2 L604.8 748.4" stroke-width="7"/>
<path d="M572.5 716.1 L568.5 740.3" stroke-width="7"/>
<path d="M419.3 752.4 L423.4 804.8 L443.5 837.1 L455.6 877.4 L455.6 900.0" stroke-width="7"/>
<path d="M447.6 756.4 L451.6 804.8" stroke-width="7"/>
<path d="M475.8 738.3 L477.8 837.1" stroke-width="7"/>
<path d="M423.4 804.8 L524.2 792.7 L528.2 772.6" stroke-width="7"/>
<path d="M504.0 768.5 L504.0 792.7" stroke-width="7"/>
<path d="M443.5 837.1 L564.5 845.1 L580.6 796.8 L700.0 788.7" stroke-width="7"/>
<path d="M564.5 845.1 L604.8 853.2 L645.1 900.0" stroke-width="7"/>
<path d="M625.0 829.0 L669.3 825.0" stroke-width="7"/>
<path d="M596.7 861.3 L600.8 900.0" stroke-width="7"/>
<path d="M685.4 833.0 L685.4 853.2" stroke-width="7"/>
<path d="M893.5 450.0 L889.5 510.5 L893.5 651.6 L877.4 675.8" stroke-width="7"/>
<path d="M845.2 486.3 L889.5 502.4 L962.1 518.5 L1006.4 526.6" stroke-width="7"/>
<path d="M958.0 450.0 L990.3 502.4 L1006.4 526.6 L1010.5 583.1" stroke-width="7"/>
<path d="M966.1 530.6 L950.0 583.1 L933.9 667.7" stroke-width="7"/>
<path d="M833.1 562.9 L901.6 579.0" stroke-width="7"/>
<path d="M792.7 591.1 L804.8 595.2" stroke-width="7"/>
<path d="M1042.7 458.1 L1131.4 454.0 L1135.5 474.2" stroke-width="7"/>
<path d="M1062.9 466.1 L1050.8 502.4" stroke-width="7"/>
<path d="M1135.5 474.2 L1103.2 514.5" stroke-width="7"/>
<path d="M1006.4 526.6 L1050.8 502.4" stroke-width="7"/>
<path d="M1066.9 538.7 L1064.9 611.3 L1079.0 667.7 L1087.1 732.2" stroke-width="7"/>
<path d="M1010.5 579.0 L1038.7 581.0" stroke-width="7"/>
<path d="M893.5 651.6 L982.2 691.9 L1042.7 716.1 L1079.0 728.2 L1143.5 724.2 L1143.5 704.0" stroke-width="7"/>
<path d="M954.0 667.7 L974.2 691.9" stroke-width="7"/>
<path d="M1099.2 667.7 L1111.3 732.2" stroke-width="7"/>
<path d="M1062.9 683.9 L1075.0 716.1" stroke-width="7"/>
<path d="M1018.5 679.8 L1042.7 679.8" stroke-width="7"/>
<path d="M881.4 708.0 L925.8 712.1 L917.7 744.3 L873.4 740.3 L881.4 708.0" stroke-width="7"/>
<path d="M873.4 740.3 L861.3 772.6" stroke-width="7"/>
<path d="M933.9 667.7 L941.9 724.2 L970.1 728.2" stroke-width="7"/>
<path d="M941.9 724.2 L946.0 756.4 L925.8 784.7" stroke-width="7"/>
<path d="M792.7 675.8 L829.0 687.9 L821.0 704.0 L780.6 708.0" stroke-width="7"/>
<path d="M752.4 764.5 L861.3 776.6 L881.4 780.6" stroke-width="7"/>
<path d="M889.5 768.5 L881.4 780.6" stroke-width="7"/>
<path d="M917.7 784.7 L950.0 784.7" stroke-width="7"/>
<path d="M998.4 708.0 L982.2 784.7 L958.0 837.1 L941.9 877.4 L925.8 900.0" stroke-width="7"/>
<path d="M1042.7 716.1 L1026.6 780.6 L1042.7 784.7 L1040.7 808.8" stroke-width="7"/>
<path d="M982.2 784.7 L1042.7 784.7" stroke-width="7"/>
<path d="M966.1 808.8 L1038.7 804.8" stroke-width="7"/>
<path d="M958.0 837.1 L1111.3 853.2" stroke-width="7"/>
<path d="M1099.2 829.0 L1099.2 853.2" stroke-width="7"/>
<path d="M1062.9 853.2 L1060.9 877.4" stroke-width="7"/>
<path d="M744.4 792.7 L780.6 804.8" stroke-width="7"/>
<path d="M792.7 877.4 L861.3 837.1 L901.6 804.8 L893.5 837.1 L901.6 877.4" stroke-width="7"/>
<path d="M861.3 837.1 L877.4 900.0" stroke-width="7"/>
<path d="M821.0 865.3 L901.6 877.4 L941.9 877.4" stroke-width="7"/>
<path d="M925.8 812.9 L917.7 869.3" stroke-width="7"/>
<path d="M700.0 466.1 L744.4 474.2" stroke-width="7"/>
<path d="M700.0 583.1 L764.5 603.2" stroke-width="7"/>
<path d="M700.0 627.4 L724.2 631.4" stroke-width="7"/>
<path d="M708.1 796.8 L740.3 800.8" stroke-width="7"/>
<path d="M700.0 853.2 L740.3 857.2" stroke-width="7"/>
<path d="M1400.0 498.4 L1304.8 510.5 L1264.5 562.9 L1204.0 583.1 L1208.0 603.2" stroke-width="8"/>
<path d="M1187.9 566.9 L1191.9 550.8 L1264.5 554.8 L1292.7 571.0 L1329.0 623.4 L1329.0 643.5" stroke-width="7"/>
<path d="M1212.1 595.2 L1284.6 583.1" stroke-width="7"/>
<path d="M1224.2 619.3 L1304.8 603.2" stroke-width="7"/>
<path d="M1264.5 635.5 L1320.9 623.4" stroke-width="7"/>
<path d="M1296.7 518.5 L1329.0 571.0 L1361.2 595.2" stroke-width="7"/>
<path d="M1341.1 518.5 L1365.3 566.9" stroke-width="7"/>
<path d="M1377.4 510.5 L1400.0 546.8" stroke-width="7"/>
<path d="M1264.5 708.0 L1400.0 691.9" stroke-width="7"/>
<path d="M1260.4 732.2 L1284.6 812.9 L1264.5 837.1 L1304.8 900.0" stroke-width="7"/>
<path d="M1256.4 837.1 L1320.9 812.9 L1369.3 825.0" stroke-width="7"/>
<path d="M1280.6 804.8 L1296.7 800.8" stroke-width="7"/>
<path d="M1264.5 853.2 L1329.0 829.0" stroke-width="7"/>
<path d="M1272.5 877.4 L1345.1 853.2" stroke-width="7"/>
<path d="M1369.3 772.6 L1400.0 812.9" stroke-width="7"/>
<path d="M1329.0 853.2 L1365.3 900.0" stroke-width="7"/>
<path d="M1609.7 450.0 L1601.6 490.3 L1569.3 542.7 L1521.0 579.0 L1452.4 631.4 L1448.4 691.9 L1456.4 772.6 L1480.6 853.2 L1504.8 900.0" stroke-width="10"/>
<path d="M1400.0 482.3 L1440.3 474.2 L1500.8 486.3 L1533.1 450.0" stroke-width="8"/>
<path d="M1400.0 530.6 L1452.4 583.1" stroke-width="7"/>
<path d="M1561.3 554.8 L1440.3 639.5" stroke-width="8"/>
<path d="M1400.0 502.4 L1424.2 490.3" stroke-width="7"/>
<path d="M1412.1 542.7 L1444.4 518.5 L1480.6 550.8" stroke-width="7"/>
<path d="M1460.5 502.4 L1516.9 538.7" stroke-width="7"/>
<path d="M1452.4 691.9 L1569.3 708.0" stroke-width="7"/>
<path d="M1504.8 659.7 L1573.4 663.7" stroke-width="7"/>
<path d="M1500.8 732.2 L1569.3 736.3" stroke-width="7"/>
<path d="M1504.8 764.5 L1533.1 768.5" stroke-width="7"/>
<path d="M1500.8 651.6 L1496.8 853.2" stroke-width="7"/>
<path d="M1577.4 643.5 L1573.4 732.2 L1589.5 833.0 L1601.6 900.0" stroke-width="8"/>
<path d="M1609.7 603.2 L1577.4 643.5" stroke-width="7"/>
<path d="M1545.2 627.4 L1617.7 611.3" stroke-width="7"/>
<path d="M1400.0 687.9 L1452.4 691.9" stroke-width="7"/>
<path d="M1400.0 812.9 L1448.4 837.1 L1480.6 900.0" stroke-width="7"/>
<path d="M1521.0 804.8 L1553.2 812.9 L1537.1 853.2 L1504.8 837.1" stroke-width="7"/>
<path d="M1682.2 510.5 L1762.9 450.0" stroke-width="6"/>
<path d="M1779.0 530.6 L1895.9 450.0" stroke-width="6"/>
<path d="M1787.1 571.0 L1916.1 474.2" stroke-width="6"/>
<path d="M1827.4 575.0 L1920.1 510.5" stroke-width="6"/>
<path d="M1625.8 514.5 L1706.4 450.0" stroke-width="6"/>
<path d="M1658.0 450.0 L1787.1 566.9" stroke-width="6"/>
<path d="M1762.9 522.6 L1795.1 554.8" stroke-width="6"/>
<path d="M1803.2 450.0 L1875.8 510.5" stroke-width="6"/>
<path d="M1851.6 450.0 L1904.0 490.3" stroke-width="6"/>
<path d="M1609.7 474.2 L1706.4 478.2" stroke-width="7"/>
<path d="M1641.9 450.0 L1646.0 474.2" stroke-width="7"/>
<path d="M1770.9 550.8 L1766.9 675.8 L1754.8 792.7" stroke-width="7"/>
<path d="M1734.7 542.7 L1738.7 623.4" stroke-width="7"/>
<path d="M1712.5 591.1 L1714.5 619.3" stroke-width="7"/>
<path d="M1702.4 623.4 L1908.0 627.4" stroke-width="7"/>
<path d="M1775.0 583.1 L2083.0 587.1" stroke-width="7"/>
<path d="M1646.0 651.6 L1904.0 667.7 L2029.0 679.8 L2037.1 708.0" stroke-width="7"/>
<path d="M1938.3 450.0 L1924.2 571.0 L1912.1 675.8 L1900.0 812.9 L1895.9 900.0" stroke-width="10"/>
<path d="M1940.3 502.4 L2083.0 506.4" stroke-width="7"/>
<path d="M1936.3 542.7 L2083.0 546.8" stroke-width="7"/>
<path d="M1920.1 639.5 L2012.9 643.5 L2029.0 679.8" stroke-width="7"/>
<path d="M1916.1 716.1 L1984.6 720.1" stroke-width="7"/>
<path d="M1904.0 784.7 L1936.3 782.6" stroke-width="7"/>
<path d="M1956.4 450.0 L1972.5 502.4" stroke-width="7"/>
<path d="M2029.0 450.0 L2083.0 502.4" stroke-width="7"/>
<path d="M1787.1 683.9 L1783.0 792.7" stroke-width="6"/>
<path d="M1795.1 704.0 L1883.8 706.0 L1879.8 756.4" stroke-width="6"/>
<path d="M1787.1 732.2 L1867.7 732.2" stroke-width="6"/>
<path d="M1779.0 764.5 L1871.7 760.5" stroke-width="6"/>
<path d="M1714.5 804.8 L1867.7 792.7 L1867.7 853.2" stroke-width="6"/>
<path d="M1742.7 865.3 L1924.2 869.3" stroke-width="6"/>
<path d="M1641.9 683.9 L1637.9 804.8 L1686.3 808.8" stroke-width="6"/>
<path d="M1650.0 691.9 L1734.7 696.0 L1730.6 788.7" stroke-width="6"/>
<path d="M1650.0 712.1 L1730.6 716.1" stroke-width="6"/>
<path d="M700.0 8.1 L728.2 28.2 L780.6 56.4" stroke-width="7"/>
<path d="M700.0 36.3 L724.2 52.4 L764.5 76.6" stroke-width="7"/>
<path d="M700.0 68.5 L732.3 88.7 L756.4 100.8" stroke-width="7"/>
<path d="M1329.0 133.1 L1400.0 141.1" stroke-width="7"/>
<path d="M1337.1 104.8 L1341.1 133.1" stroke-width="7"/>
<path d="M1385.4 40.3 L1400.0 44.4" stroke-width="7"/>
<path d="M1320.9 24.2 L1400.0 16.1" stroke-width="7"/>
<path d="M1163.7 354.8 L1155.6 450.0" stroke-width="7"/>
<path d="M1070.9 354.8 L1111.3 362.9" stroke-width="7"/>
<path d="M1030.6 403.2 L1022.6 450.0" stroke-width="7"/>
<path d="M1200.0 282.2 L1264.5 298.4" stroke-width="7"/>
<path d="M1224.2 362.9 L1304.8 379.0 L1312.9 450.0" stroke-width="7"/>
<path d="M1345.1 346.8 L1400.0 354.8" stroke-width="7"/>
<path d="M1365.3 282.2 L1400.0 290.3" stroke-width="7"/>
<path d="M925.8 225.8 L933.9 250.0" stroke-width="7"/>
<path d="M941.9 193.5 L937.9 225.8" stroke-width="7"/>
<path d="M982.2 92.7 L990.3 149.2" stroke-width="7"/>
<path d="M1014.5 153.2 L1006.4 189.5" stroke-width="7"/>
<path d="M1042.7 161.3 L1042.7 201.6" stroke-width="7"/>
<path d="M869.3 133.1 L873.4 173.4 L837.1 189.5 L833.1 209.7" stroke-width="7"/>
<path d="M724.2 298.4 L716.1 346.8" stroke-width="7"/>
<path d="M780.6 241.9 L776.6 354.8" stroke-width="7"/>
<path d="M881.4 334.7 L909.7 350.8" stroke-width="7"/>
<path d="M1940.3 298.4 L2083.0 310.5" stroke-width="7"/>
<path d="M1996.7 334.7 L2045.1 403.2" stroke-width="7"/>
<path d="M2029.0 354.8 L2083.0 362.9" stroke-width="7"/>
<path d="M1964.5 362.9 L1996.7 403.2" stroke-width="7"/>
<path d="M1940.3 387.1 L1980.6 450.0" stroke-width="7"/>
<path d="M2029.0 403.2 L2045.1 450.0" stroke-width="7"/>
<path d="M2053.2 314.5 L2069.3 354.8" stroke-width="7"/>
<path d="M1843.5 450.0 L1900.0 407.2" stroke-width="7"/>
<path d="M1650.0 450.0 L1682.2 427.4" stroke-width="7"/>
<path d="M1746.8 450.0 L1762.9 427.4 L1734.7 411.3" stroke-width="7"/>
<path d="M2083.0 100.8 L2065.3 129.0" stroke-width="7"/>
<path d="M2069.3 250.0 L2083.0 258.0" stroke-width="7"/>
<path d="M1452.4 0.0 L1448.4 24.2" stroke-width="7"/>
<path d="M1492.7 24.2 L1504.8 60.5" stroke-width="7"/>
<path d="M1400.0 36.3 L1424.2 38.3" stroke-width="7"/>
<path d="M1533.1 0.0 L1537.1 48.4 L1577.4 52.4" stroke-width="7"/>
<path d="M1468.5 250.0 L1472.6 282.2" stroke-width="7"/>
<path d="M1400.0 241.9 L1424.2 246.0" stroke-width="7"/>
<path d="M1468.5 322.6 L1470.6 354.8" stroke-width="7"/>
<path d="M1143.5 732.2 L1204.0 756.4" stroke-width="7"/>
<path d="M1103.2 514.5 L1119.3 546.8" stroke-width="7"/>
<path d="M925.8 571.0 L966.1 583.1" stroke-width="7"/>
<path d="M901.6 611.3 L950.0 619.3" stroke-width="7"/>
<path d="M982.2 611.3 L1006.4 627.4 L1010.5 583.1" stroke-width="7"/>
<path d="M1123.4 812.9 L1143.5 853.2 L1135.5 900.0" stroke-width="7"/>
<path d="M982.2 853.2 L990.3 900.0" stroke-width="7"/>
<path d="M1022.6 853.2 L1038.7 900.0" stroke-width="7"/>
<path d="M800.8 812.9 L841.1 829.0" stroke-width="7"/>
<path d="M800.8 732.2 L853.2 740.3" stroke-width="7"/>
<path d="M1329.0 643.5 L1400.0 635.5" stroke-width="7"/>
<path d="M1345.1 675.8 L1400.0 667.7" stroke-width="7"/>
<path d="M1272.5 756.4 L1345.1 748.4 L1400.0 756.4" stroke-width="7"/>
<path d="M1292.7 784.7 L1361.2 772.6" stroke-width="7"/>
<path d="M1353.2 869.3 L1400.0 853.2" stroke-width="7"/>
<path d="M1304.8 732.2 L1312.9 756.4" stroke-width="7"/>
<path d="M1236.3 526.6 L1204.0 554.8" stroke-width="7"/>
<path d="M1353.2 490.3 L1400.0 474.2" stroke-width="7"/>
<path d="M1754.8 474.2 L1827.4 534.7" stroke-width="6"/>
<path d="M1706.4 502.4 L1762.9 550.8" stroke-width="6"/>
<path d="M1875.8 510.5 L1920.1 546.8" stroke-width="6"/>
<path d="M1730.6 450.0 L1803.2 510.5" stroke-width="6"/>
<path d="M1835.5 490.3 L1883.8 530.6" stroke-width="6"/>
<path d="M1722.6 530.6 L1811.3 462.1" stroke-width="6"/>
<path d="M1650.0 494.4 L1698.4 458.1" stroke-width="6"/>
<path d="M1843.5 554.8 L1924.2 494.4" stroke-width="6"/>
<path d="M1400.0 583.1 L1424.2 603.2 L1452.4 631.4" stroke-width="7"/>
<path d="M1480.6 510.5 L1533.1 546.8" stroke-width="7"/>
<path d="M1424.2 550.8 L1472.6 583.1" stroke-width="7"/>
<path d="M1400.0 611.3 L1420.2 627.4" stroke-width="7"/>
<path d="M1492.7 583.1 L1533.1 611.3" stroke-width="7"/>
<path d="M1460.5 611.3 L1488.7 631.4" stroke-width="7"/>
<path d="M1452.4 732.2 L1500.8 736.3" stroke-width="7"/>
<path d="M1456.4 772.6 L1500.8 776.6" stroke-width="7"/>
<path d="M1400.0 732.2 L1448.4 740.3" stroke-width="7"/>
<path d="M1400.0 772.6 L1452.4 784.7" stroke-width="7"/>
<path d="M1500.8 800.8 L1577.4 804.8" stroke-width="7"/>
<path d="M1521.0 853.2 L1589.5 857.2" stroke-width="7"/>
<path d="M1424.2 853.2 L1440.3 900.0" stroke-width="7"/>
<path d="M1940.3 611.3 L2083.0 615.3" stroke-width="7"/>
<path d="M1920.1 675.8 L2083.0 683.9" stroke-width="7"/>
<path d="M1984.6 720.1 L1988.7 812.9" stroke-width="7"/>
<path d="M1908.0 752.4 L1984.6 756.4" stroke-width="7"/>
<path d="M1904.0 833.0 L1984.6 837.1" stroke-width="7"/>
<path d="M1976.6 546.8 L1980.6 587.1" stroke-width="7"/>
<path d="M2029.0 506.4 L2033.0 546.8" stroke-width="7"/>
<path d="M1807.2 812.9 L1811.3 865.3" stroke-width="6"/>
<path d="M1754.8 825.0 L1758.8 865.3" stroke-width="6"/>
<path d="M1835.5 796.8 L1839.5 829.0 L1867.7 829.0" stroke-width="6"/>
<path d="M1617.7 853.2 L1722.6 857.2" stroke-width="6"/>
<path d="M1650.0 877.4 L1746.8 885.5" stroke-width="6"/>
<path d="M1641.9 583.1 L1706.4 587.1" stroke-width="6"/>
<path d="M1625.8 550.8 L1682.2 554.8 L1686.3 623.4" stroke-width="6"/>
<path d="M1617.7 611.3 L1641.9 651.6" stroke-width="6"/>
<path d="M334.7 732.2 L395.1 740.3" stroke-width="7"/>
<path d="M346.8 772.6 L419.3 764.5" stroke-width="7"/>
<path d="M354.8 700.0 L362.9 732.2" stroke-width="7"/>
<path d="M495.9 530.6 L524.2 583.1" stroke-width="7"/>
<path d="M483.8 490.3 L544.3 498.4" stroke-width="7"/>
<path d="M443.5 450.0 L451.6 490.3" stroke-width="7"/>
<path d="M383.0 474.2 L387.1 514.5" stroke-width="7"/>
<path d="M645.1 651.6 L700.0 659.7" stroke-width="7"/>
<path d="M629.0 716.1 L645.1 756.4" stroke-width="7"/>
<path d="M500.0 853.2 L504.0 900.0" stroke-width="7"/>
<path d="M536.3 869.3 L596.7 877.4" stroke-width="7"/>
<path d="M362.9 865.3 L366.9 900.0" stroke-width="7"/>
<path d="M0.0 498.4 L20.2 498.4" stroke-width="7"/>
<path d="M72.6 490.3 L76.6 562.9" stroke-width="7"/>
<path d="M40.3 530.6 L72.6 526.6" stroke-width="7"/>
<path d="M80.6 611.3 L121.0 611.3" stroke-width="7"/>
<path d="M0.0 732.2 L40.3 740.3 L52.4 772.6" stroke-width="7"/>
<path d="M16.1 788.7 L44.4 792.7" stroke-width="7"/>
<path d="M241.9 100.8 L282.2 133.1 L334.7 185.5" stroke-width="7"/>
<path d="M225.8 24.2 L203.6 100.8" stroke-width="7"/>
<path d="M504.0 121.0 L536.3 258.0" stroke-width="7"/>
<path d="M455.6 92.7 L504.0 121.0" stroke-width="7"/>
<path d="M483.8 169.3 L524.2 189.5" stroke-width="7"/>
<path d="M0.0 282.2 L44.4 294.3" stroke-width="7"/>
<path d="M0.0 346.8 L36.3 354.8" stroke-width="7"/>
<path d="M346.8 354.8 L403.2 403.2 L459.6 393.1" stroke-width="7"/>
<path d="M564.5 403.2 L604.8 450.0" stroke-width="7"/>
<path d="M403.2 415.3 L423.4 450.0" stroke-width="7"/>
<path d="M169.3 379.0 L217.7 387.1" stroke-width="7"/>
<path d="M92.7 450.0 L104.8 403.2 L161.3 387.1" stroke-width="7"/>
</g></g>
<text x="-7.3" y="183.5" font-size="25" font-weight="400" fill="#5F6368" transform="rotate(-72 -7.3 183.5)" stroke="#fff" stroke-width="4.5" stroke-linejoin="round" paint-order="stroke">Jl. Pusa</text>
<text x="421.8" y="-16.1" font-size="25" font-weight="400" fill="#5F6368" stroke="#fff" stroke-width="4.5" stroke-linejoin="round" paint-order="stroke"></text>

<text x="672" y="133" font-size="25" fill="#5F6368" transform="rotate(48 672 133)" textLength="160" lengthAdjust="spacingAndGlyphs" stroke="#fff" stroke-width="4" stroke-linejoin="round" paint-order="stroke">Jl. Pengasinan</text>
<text x="930.6" y="155.2" font-size="25" font-weight="400" fill="#5F6368" textLength="114.9" lengthAdjust="spacingAndGlyphs" transform="rotate(-90 930.6 155.2)" stroke="#fff" stroke-width="4.5" stroke-linejoin="round" paint-order="stroke">Gg. Poncol</text>
<path id="rp1" d="M1805 36.5 Q1885 8 2000 1" fill="none"/><text font-size="25" fill="#5F6368" stroke="#fff" stroke-width="4" stroke-linejoin="round" paint-order="stroke"><textPath href="#rp1" textLength="200" lengthAdjust="spacingAndGlyphs">Jl. Raya Muchtar</textPath></text>
<text x="1758.8" y="40.3" font-size="25" font-weight="400" fill="#5F6368" transform="rotate(-70 1758.8 40.3)" stroke="#fff" stroke-width="4.5" stroke-linejoin="round" paint-order="stroke">Jl. J</text>
<text x="1536.3" y="253.2" font-size="25" font-weight="400" fill="#5F6368" textLength="151.6" lengthAdjust="spacingAndGlyphs" transform="rotate(73 1536.3 253.2)" stroke="#fff" stroke-width="4.5" stroke-linejoin="round" paint-order="stroke">Jl. Bukit Rivaria</text>
<text x="1953.2" y="241.1" font-size="25" font-weight="400" fill="#5F6368" textLength="177.4" lengthAdjust="spacingAndGlyphs" transform="rotate(-33 1953.2 241.1)" stroke="#fff" stroke-width="4.5" stroke-linejoin="round" paint-order="stroke">Jl. Blvd Sawangan</text>
<text x="1947" y="631" font-size="25" fill="#5F6368" transform="rotate(-87 1947 631)" textLength="269" lengthAdjust="spacingAndGlyphs" stroke="#fff" stroke-width="4" stroke-linejoin="round" paint-order="stroke">Jl. Blvd Sawangan Village</text>
<text x="277.4" y="656.4" font-size="25" font-weight="400" fill="#5F6368" textLength="102.0" lengthAdjust="spacingAndGlyphs" transform="rotate(-75 277.4 656.4)" stroke="#fff" stroke-width="4.5" stroke-linejoin="round" paint-order="stroke">Jl. Raihan</text>
<text x="287.1" y="645.6" font-size="25" font-weight="400" fill="#5F6368" textLength="100.8" lengthAdjust="spacingAndGlyphs" transform="rotate(90 287.1 645.6)" stroke="#fff" stroke-width="4.5" stroke-linejoin="round" paint-order="stroke">Jl. Plered</text>
<text x="620.9" y="796.8" font-size="25" font-weight="400" fill="#5F6368" textLength="99.2" lengthAdjust="spacingAndGlyphs" stroke="#fff" stroke-width="4.5" stroke-linejoin="round" paint-order="stroke">Jl. Plered</text>
<text x="346.8" y="872.6" font-size="25" font-weight="400" fill="#5F6368" textLength="102.8" lengthAdjust="spacingAndGlyphs" transform="rotate(-16 346.8 872.6)" stroke="#fff" stroke-width="4.5" stroke-linejoin="round" paint-order="stroke">Jl. Plered</text>
<text x="760.5" y="885.5" font-size="25" font-weight="400" fill="#5F6368" textLength="86.7" lengthAdjust="spacingAndGlyphs" transform="rotate(12 760.5 885.5)" stroke="#fff" stroke-width="4.5" stroke-linejoin="round" paint-order="stroke">Jl. BSI 1</text>
<text x="1388" y="624" font-size="25" fill="#5F6368" transform="rotate(-31.6 1388 624)" textLength="115" lengthAdjust="spacingAndGlyphs" stroke="#fff" stroke-width="4" stroke-linejoin="round" paint-order="stroke">Blk. A4-C4</text>
<text x="1504.8" y="802.8" font-size="25" font-weight="400" fill="#5F6368" textLength="74.6" lengthAdjust="spacingAndGlyphs" transform="rotate(-90 1504.8 802.8)" stroke="#fff" stroke-width="4.5" stroke-linejoin="round" paint-order="stroke">Blk. B2</text>
<text x="1594.3" y="833.8" font-size="25" font-weight="400" fill="#5F6368" textLength="189.5" lengthAdjust="spacingAndGlyphs" transform="rotate(-88.5 1594.3 833.8)" stroke="#fff" stroke-width="4.5" stroke-linejoin="round" paint-order="stroke">Jl. Bukit Rivaria J2</text>
<text x="1695.5" y="667.7" font-size="25" font-weight="400" fill="#5F6368" textLength="170.6" lengthAdjust="spacingAndGlyphs" transform="rotate(3.5 1695.5 667.7)" stroke="#fff" stroke-width="4.5" stroke-linejoin="round" paint-order="stroke">Jl. Yasmin Raya</text>
<text x="202.8" y="233.9" font-size="25" font-weight="400" fill="#546E7A" text-anchor="end" textLength="196.8" lengthAdjust="spacingAndGlyphs" stroke="#fff" stroke-width="4.5" stroke-linejoin="round" paint-order="stroke">Lomoto Terrace</text>
<text x="202.8" y="262.1" font-size="25" font-weight="400" fill="#546E7A" text-anchor="end" textLength="180.6" lengthAdjust="spacingAndGlyphs" stroke="#fff" stroke-width="4.5" stroke-linejoin="round" paint-order="stroke">- Studio Rental</text>
<text x="356.8" y="194.7" font-size="25" font-weight="400" fill="#C96A10" textLength="272.2" lengthAdjust="spacingAndGlyphs" stroke="#fff" stroke-width="4.5" stroke-linejoin="round" paint-order="stroke">Telaga Seafood Resto</text>
<text x="356.8" y="223.0" font-size="25" font-weight="400" fill="#C96A10" textLength="221.8" lengthAdjust="spacingAndGlyphs" stroke="#fff" stroke-width="4.5" stroke-linejoin="round" paint-order="stroke">@Shila Sawangan</text>
<text x="154.4" y="331.8" font-size="25" font-weight="400" fill="#C96A10" textLength="248.8" lengthAdjust="spacingAndGlyphs" stroke="#fff" stroke-width="4.5" stroke-linejoin="round" paint-order="stroke">Bawang Putih Resto</text>
<text x="536.3" y="300.4" font-size="25" font-weight="400" fill="#C96A10" textLength="312.9" lengthAdjust="spacingAndGlyphs" stroke="#fff" stroke-width="4.5" stroke-linejoin="round" paint-order="stroke">Telaga Kuliner Sawangan</text>
<text x="554.8" y="338.7" font-size="25" font-weight="400" fill="#C96A10" textLength="142.3" lengthAdjust="spacingAndGlyphs" stroke="#fff" stroke-width="4.5" stroke-linejoin="round" paint-order="stroke">KOPI NAKO</text>
<text x="543.5" y="364.9" font-size="25" font-weight="400" fill="#C96A10" textLength="152.8" lengthAdjust="spacingAndGlyphs" stroke="#fff" stroke-width="4.5" stroke-linejoin="round" paint-order="stroke">SAWANGAN</text>
<text x="877.4" y="389.1" font-size="25" font-weight="400" fill="#C96A10" textLength="195.6" lengthAdjust="spacingAndGlyphs" stroke="#fff" stroke-width="4.5" stroke-linejoin="round" paint-order="stroke">RM Kari Minang</text>
<text x="877.4" y="416.5" font-size="25" font-weight="400" fill="#C96A10" textLength="127.0" lengthAdjust="spacingAndGlyphs" stroke="#fff" stroke-width="4.5" stroke-linejoin="round" paint-order="stroke">Sawangan</text>
<text x="917.7" y="326.6" font-size="25" font-weight="400" fill="#546E7A" textLength="305.2" lengthAdjust="spacingAndGlyphs" stroke="#fff" stroke-width="4.5" stroke-linejoin="round" paint-order="stroke">CARfix Sawangan Depok</text>
<text x="839.1" y="186.3" font-size="25" font-weight="400" fill="#546E7A" textLength="217.7" lengthAdjust="spacingAndGlyphs" stroke="#fff" stroke-width="4.5" stroke-linejoin="round" paint-order="stroke">Amore Sawangan</text>
<text x="872.6" y="11.3" font-size="25" font-weight="700" fill="#D93025" textLength="220.6" lengthAdjust="spacingAndGlyphs" stroke="#fff" stroke-width="4.5" stroke-linejoin="round" paint-order="stroke">RSUD Kota Depok</text>
<text x="1273.4" y="137.1" font-size="25" font-weight="400" fill="#546E7A" textLength="281.0" lengthAdjust="spacingAndGlyphs" stroke="#fff" stroke-width="4.5" stroke-linejoin="round" paint-order="stroke">Puskesmas Sawangan</text>
<text x="2016.9" y="366.9" font-size="25" font-weight="400" fill="#1A73E8" textLength="60.5" lengthAdjust="spacingAndGlyphs" stroke="#fff" stroke-width="4.5" stroke-linejoin="round" paint-order="stroke">Rasa</text>
<text x="1950.4" y="445.5" font-size="25" font-weight="400" fill="#546E7A" textLength="209.7" lengthAdjust="spacingAndGlyphs" stroke="#fff" stroke-width="4.5" stroke-linejoin="round" paint-order="stroke">GRIYA SAWANGAN</text>
<text x="219.7" y="500.4" font-size="25" font-weight="400" fill="#546E7A" text-anchor="end" textLength="199.6" lengthAdjust="spacingAndGlyphs" stroke="#fff" stroke-width="4.5" stroke-linejoin="round" paint-order="stroke">Villa Rizki Ilhami</text>
<text x="221.8" y="529.8" font-size="25" font-weight="400" fill="#546E7A" text-anchor="end" textLength="193.5" lengthAdjust="spacingAndGlyphs" stroke="#fff" stroke-width="4.5" stroke-linejoin="round" paint-order="stroke">2 - Cluster Mina</text>
<text x="354.0" y="498.4" font-size="25" font-weight="400" fill="#546E7A" textLength="194.3" lengthAdjust="spacingAndGlyphs" stroke="#fff" stroke-width="4.5" stroke-linejoin="round" paint-order="stroke">Vila Rizki Ilhami</text>
<text x="354.0" y="526.6" font-size="25" font-weight="400" fill="#546E7A" textLength="214.5" lengthAdjust="spacingAndGlyphs" stroke="#fff" stroke-width="4.5" stroke-linejoin="round" paint-order="stroke">2 - Cluster Arafah</text>
<text x="641.1" y="542.7" font-size="25" font-weight="400" fill="#546E7A" textLength="161.7" lengthAdjust="spacingAndGlyphs" stroke="#fff" stroke-width="4.5" stroke-linejoin="round" paint-order="stroke">UPTD PUSAT</text>
<text x="629.0" y="570.2" font-size="25" font-weight="400" fill="#546E7A" textLength="171.8" lengthAdjust="spacingAndGlyphs" stroke="#fff" stroke-width="4.5" stroke-linejoin="round" paint-order="stroke">KESEHATAN...</text>
<text x="488.7" y="663.7" font-size="25" font-weight="400" fill="#1A73E8" textLength="263.7" lengthAdjust="spacingAndGlyphs" stroke="#fff" stroke-width="4.5" stroke-linejoin="round" paint-order="stroke">Frozzyoyshop Frozen</text>
<text x="544.3" y="691.1" font-size="25" font-weight="400" fill="#1A73E8" textLength="209.3" lengthAdjust="spacingAndGlyphs" stroke="#fff" stroke-width="4.5" stroke-linejoin="round" paint-order="stroke">food Pengasinan</text>
<text x="235.1" y="904.8" font-size="25" font-weight="400" fill="#546E7A" textLength="220.6" lengthAdjust="spacingAndGlyphs" stroke="#fff" stroke-width="4.5" stroke-linejoin="round" paint-order="stroke">Taman Sawangan</text>
<text x="978.2" y="531.8" font-size="25" font-weight="400" fill="#546E7A" textLength="254.0" lengthAdjust="spacingAndGlyphs" stroke="#fff" stroke-width="4.5" stroke-linejoin="round" paint-order="stroke">SMA Negeri 5 Depok</text>
<text x="914.5" y="611.3" font-size="25" font-weight="400" fill="#546E7A" textLength="142.3" lengthAdjust="spacingAndGlyphs" stroke="#fff" stroke-width="4.5" stroke-linejoin="round" paint-order="stroke">Perumahan</text>
<text x="826.2" y="638.7" font-size="25" font-weight="400" fill="#546E7A" textLength="230.6" lengthAdjust="spacingAndGlyphs" stroke="#fff" stroke-width="4.5" stroke-linejoin="round" paint-order="stroke">Mutiara Sawangan</text>
<text x="1208.8" y="660.9" font-size="25" font-weight="400" fill="#188038" textLength="193.1" lengthAdjust="spacingAndGlyphs" stroke="#fff" stroke-width="4.5" stroke-linejoin="round" paint-order="stroke">Swimming Pool</text>
<text x="1271.7" y="688.3" font-size="25" font-weight="400" fill="#188038" textLength="129.8" lengthAdjust="spacingAndGlyphs" stroke="#fff" stroke-width="4.5" stroke-linejoin="round" paint-order="stroke">Rivaria Hill</text>
<text x="1048.8" y="761.3" font-size="25" font-weight="400" fill="#188038" textLength="312.5" lengthAdjust="spacingAndGlyphs" stroke="#fff" stroke-width="4.5" stroke-linejoin="round" paint-order="stroke">Bukit Rivaria Sport center</text>
<text x="1579.4" y="516.5" font-size="25" font-weight="400" fill="#1A73E8" textLength="312.5" lengthAdjust="spacingAndGlyphs" stroke="#fff" stroke-width="4.5" stroke-linejoin="round" paint-order="stroke">Depok Branded Stocklots</text>
<text x="1605.6" y="742.3" font-size="25" font-weight="400" fill="#188038" textLength="181.4" lengthAdjust="spacingAndGlyphs" stroke="#fff" stroke-width="4.5" stroke-linejoin="round" paint-order="stroke">Taman Cluster</text>
<text x="1641.9" y="770.5" font-size="25" font-weight="400" fill="#188038" textLength="106.8" lengthAdjust="spacingAndGlyphs" stroke="#fff" stroke-width="4.5" stroke-linejoin="round" paint-order="stroke">Jasmine</text>
<text x="1643.1" y="843.1" font-size="25" font-weight="400" fill="#546E7A" textLength="220.6" lengthAdjust="spacingAndGlyphs" stroke="#fff" stroke-width="4.5" stroke-linejoin="round" paint-order="stroke">Sawangan Village</text>
<text x="1950.4" y="756.4" font-size="25" font-weight="400" fill="#546E7A" stroke="#fff" stroke-width="4.5" stroke-linejoin="round" paint-order="stroke">SMA Negeri</text>
<text x="2061.2" y="784.7" font-size="25" font-weight="400" fill="#546E7A" stroke="#fff" stroke-width="4.5" stroke-linejoin="round" paint-order="stroke">Depok</text>
<text x="2045.1" y="616.1" font-size="25" font-weight="400" fill="#546E7A" stroke="#fff" stroke-width="4.5" stroke-linejoin="round" paint-order="stroke">SAWANGAN</text>
<path d="M228.2 266.6 C225.2 256.6 211.8 249.9 212.8 241.9 A19.6 19.6 0 1 1 243.7 241.9 C244.7 249.9 231.2 256.6 228.2 266.6 Z" fill="#78909C" stroke="#fff" stroke-width="1.5"/><circle cx="228.2" cy="229.8" r="6.6" fill="#fff"/>
<path d="M330.6 226.3 C327.6 216.3 314.2 209.6 315.2 201.6 A19.6 19.6 0 1 1 346.1 201.6 C347.1 209.6 333.6 216.3 330.6 226.3 Z" fill="#F29900" stroke="#E37400" stroke-width="1.2"/><g transform="translate(330.6 189.5)" fill="#fff"><path d="M-8.5 -10.5 v7.5 a3.8 3.8 0 0 0 2.6 3.4 v10 h2.8 v-10 a3.8 3.8 0 0 0 2.6 -3.4 v-7.5 h-1.9 v7 h-1.2 v-7 h-1.9 v7 h-1.2 v-7 Z"/><path d="M3.2 -10.5 c2.8 0 4.6 2.6 4.6 6.4 v5.2 h-2 v9.3 h-2.6 Z"/></g>
<path d="M356.8 300.9 C353.8 290.9 340.4 284.2 341.4 276.2 A19.6 19.6 0 1 1 372.3 276.2 C373.3 284.2 359.8 290.9 356.8 300.9 Z" fill="#F29900" stroke="#E37400" stroke-width="1.2"/><g transform="translate(356.8 264.1)" fill="#fff"><path d="M-8.5 -10.5 v7.5 a3.8 3.8 0 0 0 2.6 3.4 v10 h2.8 v-10 a3.8 3.8 0 0 0 2.6 -3.4 v-7.5 h-1.9 v7 h-1.2 v-7 h-1.9 v7 h-1.2 v-7 Z"/><path d="M3.2 -10.5 c2.8 0 4.6 2.6 4.6 6.4 v5.2 h-2 v9.3 h-2.6 Z"/></g>
<path d="M510.0 317.0 C507.0 307.0 493.6 300.3 494.6 292.3 A19.6 19.6 0 1 1 525.5 292.3 C526.5 300.3 513.0 307.0 510.0 317.0 Z" fill="#F29900" stroke="#E37400" stroke-width="1.2"/><g transform="translate(510.0 280.2)" fill="#fff"><path d="M-8.5 -10.5 v7.5 a3.8 3.8 0 0 0 2.6 3.4 v10 h2.8 v-10 a3.8 3.8 0 0 0 2.6 -3.4 v-7.5 h-1.9 v7 h-1.2 v-7 h-1.9 v7 h-1.2 v-7 Z"/><path d="M3.2 -10.5 c2.8 0 4.6 2.6 4.6 6.4 v5.2 h-2 v9.3 h-2.6 Z"/></g>
<g transform="translate(412.1 288.3)"><rect width="25.5" height="25.5" rx="4.5" fill="#1A73E8" stroke="#fff" stroke-width="1"/><path d="M7 5.5 h11.5 a2 2 0 0 1 2 2 v9.5 h-15.5 v-9.5 a2 2 0 0 1 2 -2 Z" fill="#fff"/><rect x="7.3" y="8" width="10.9" height="4.6" fill="#1A73E8"/><circle cx="8.8" cy="15" r="1.3" fill="#1A73E8"/><circle cx="16.7" cy="15" r="1.3" fill="#1A73E8"/><rect x="6.5" y="17" width="3" height="2.6" fill="#fff"/><rect x="16" y="17" width="3" height="2.6" fill="#fff"/></g>
<path d="M724.2 369.4 C721.2 359.4 707.7 352.7 708.7 344.7 A19.6 19.6 0 1 1 739.6 344.7 C740.6 352.7 727.2 359.4 724.2 369.4 Z" fill="#F29900" stroke="#E37400" stroke-width="1.2"/><g transform="translate(724.2 332.6)" fill="#fff"><path d="M-9 -8 h14.5 v2 h2 a3.4 3.4 0 0 1 0 6.8 h-2.3 a6 6 0 0 1 -5.7 4 h-2.5 a6 6 0 0 1 -6 -6 Z M5.5 -4 v2.8 h1.8 a1.4 1.4 0 0 0 0 -2.8 Z"/><rect x="-9.5" y="7" width="16" height="2.4"/></g>
<path d="M851.2 421.9 C848.2 411.9 834.8 405.1 835.8 397.1 A19.6 19.6 0 1 1 866.6 397.1 C867.6 405.1 854.2 411.9 851.2 421.9 Z" fill="#F29900" stroke="#E37400" stroke-width="1.2"/><g transform="translate(851.2 385.1)" fill="#fff"><path d="M-8.5 -10.5 v7.5 a3.8 3.8 0 0 0 2.6 3.4 v10 h2.8 v-10 a3.8 3.8 0 0 0 2.6 -3.4 v-7.5 h-1.9 v7 h-1.2 v-7 h-1.9 v7 h-1.2 v-7 Z"/><path d="M3.2 -10.5 c2.8 0 4.6 2.6 4.6 6.4 v5.2 h-2 v9.3 h-2.6 Z"/></g>
<path d="M962.1 296.9 C959.1 286.9 945.6 280.1 946.6 272.1 A19.6 19.6 0 1 1 977.5 272.1 C978.5 280.1 965.1 286.9 962.1 296.9 Z" fill="#78909C" stroke="#fff" stroke-width="1.5"/><circle cx="962.1" cy="260.1" r="6.6" fill="#fff"/>
<path d="M1081.8 205.3 C1078.8 195.3 1065.4 188.6 1066.4 180.6 A19.6 19.6 0 1 1 1097.3 180.6 C1098.3 188.6 1084.8 195.3 1081.8 205.3 Z" fill="#78909C" stroke="#fff" stroke-width="1.5"/><circle cx="1081.8" cy="168.5" r="6.6" fill="#fff"/>
<path d="M1119.3 28.7 C1116.3 18.7 1102.9 12.0 1103.9 4.0 A19.6 19.6 0 1 1 1134.8 4.0 C1135.8 12.0 1122.3 18.7 1119.3 28.7 Z" fill="#EA4335" stroke="#fff" stroke-width="1.5"/><g transform="translate(1119.3 -8.1)" fill="#fff"><rect x="-9" y="-9" width="4" height="18"/><rect x="5" y="-9" width="4" height="18"/><rect x="-9" y="-2" width="18" height="4"/></g>
<path d="M1267.7 224.3 C1264.7 214.3 1251.3 207.6 1252.3 199.6 A19.6 19.6 0 1 1 1283.2 199.6 C1284.2 207.6 1270.7 214.3 1267.7 224.3 Z" fill="#4B96F3" stroke="#fff" stroke-width="1.5"/><g transform="translate(1267.7 187.5)"><path d="M-10 -5.5 h20 v14.5 a1.5 1.5 0 0 1 -1.5 1.5 h-17 a1.5 1.5 0 0 1 -1.5 -1.5 Z" fill="#fff"/><path d="M-4.5 -5.5 a4.5 4.8 0 0 1 9 0" fill="none" stroke="#fff" stroke-width="2"/><path d="M-4.6 -1.5 a4.6 4.6 0 0 0 9.2 0" fill="none" stroke="#4B96F3" stroke-width="2"/></g>
<g transform="translate(1349.2 211.7)"><rect width="25.5" height="25.5" rx="4.5" fill="#1A73E8" stroke="#fff" stroke-width="1"/><path d="M7 5.5 h11.5 a2 2 0 0 1 2 2 v9.5 h-15.5 v-9.5 a2 2 0 0 1 2 -2 Z" fill="#fff"/><rect x="7.3" y="8" width="10.9" height="4.6" fill="#1A73E8"/><circle cx="8.8" cy="15" r="1.3" fill="#1A73E8"/><circle cx="16.7" cy="15" r="1.3" fill="#1A73E8"/><rect x="6.5" y="17" width="3" height="2.6" fill="#fff"/><rect x="16" y="17" width="3" height="2.6" fill="#fff"/></g>
<path d="M1578.6 157.0 C1575.6 147.0 1562.2 140.2 1563.2 132.2 A19.6 19.6 0 1 1 1594.1 132.2 C1595.1 140.2 1581.6 147.0 1578.6 157.0 Z" fill="#78909C" stroke="#fff" stroke-width="1.5"/><g transform="translate(1578.6 120.2)" fill="#fff"><path d="M0 -11.5 L11.5 -5 V-3.2 H-11.5 V-5 Z"/><rect x="-9" y="-1.5" width="3.6" height="8"/><rect x="-1.8" y="-1.5" width="3.6" height="8"/><rect x="5.4" y="-1.5" width="3.6" height="8"/><rect x="-11.5" y="8" width="23" height="2.8"/></g>
<g transform="translate(1613.7 141.9)"><rect width="25.5" height="25.5" rx="4.5" fill="#1A73E8" stroke="#fff" stroke-width="1"/><path d="M7 5.5 h11.5 a2 2 0 0 1 2 2 v9.5 h-15.5 v-9.5 a2 2 0 0 1 2 -2 Z" fill="#fff"/><rect x="7.3" y="8" width="10.9" height="4.6" fill="#1A73E8"/><circle cx="8.8" cy="15" r="1.3" fill="#1A73E8"/><circle cx="16.7" cy="15" r="1.3" fill="#1A73E8"/><rect x="6.5" y="17" width="3" height="2.6" fill="#fff"/><rect x="16" y="17" width="3" height="2.6" fill="#fff"/></g>
<g transform="translate(2003.6 -20.2)"><rect width="25.5" height="25.5" rx="4.5" fill="#1A73E8" stroke="#fff" stroke-width="1"/><path d="M7 5.5 h11.5 a2 2 0 0 1 2 2 v9.5 h-15.5 v-9.5 a2 2 0 0 1 2 -2 Z" fill="#fff"/><rect x="7.3" y="8" width="10.9" height="4.6" fill="#1A73E8"/><circle cx="8.8" cy="15" r="1.3" fill="#1A73E8"/><circle cx="16.7" cy="15" r="1.3" fill="#1A73E8"/><rect x="6.5" y="17" width="3" height="2.6" fill="#fff"/><rect x="16" y="17" width="3" height="2.6" fill="#fff"/></g>
<path d="M248.0 535.2 C245.0 525.2 231.5 518.5 232.5 510.5 A19.6 19.6 0 1 1 263.4 510.5 C264.4 518.5 251.0 525.2 248.0 535.2 Z" fill="#78909C" stroke="#fff" stroke-width="1.5"/><g transform="translate(248.0 498.4)" fill="#fff"><path d="M0 -11.5 L11.5 -5 V-3.2 H-11.5 V-5 Z"/><rect x="-9" y="-1.5" width="3.6" height="8"/><rect x="-1.8" y="-1.5" width="3.6" height="8"/><rect x="5.4" y="-1.5" width="3.6" height="8"/><rect x="-11.5" y="8" width="23" height="2.8"/></g>
<path d="M327.8 533.2 C324.8 523.2 311.4 516.4 312.4 508.4 A19.6 19.6 0 1 1 343.2 508.4 C344.2 516.4 330.8 523.2 327.8 533.2 Z" fill="#78909C" stroke="#fff" stroke-width="1.5"/><g transform="translate(327.8 496.4)" fill="#fff"><path d="M0 -11.5 L11.5 -5 V-3.2 H-11.5 V-5 Z"/><rect x="-9" y="-1.5" width="3.6" height="8"/><rect x="-1.8" y="-1.5" width="3.6" height="8"/><rect x="5.4" y="-1.5" width="3.6" height="8"/><rect x="-11.5" y="8" width="23" height="2.8"/></g>
<path d="M109.7 888.0 C106.7 878.0 93.2 871.3 94.2 863.3 A19.6 19.6 0 1 1 125.1 863.3 C126.1 871.3 112.7 878.0 109.7 888.0 Z" fill="#F06292" stroke="#fff" stroke-width="1.5"/><g transform="translate(109.7 851.2)" fill="#fff"><rect x="-11" y="-7" width="2.4" height="13"/><rect x="-11" y="1" width="22" height="2.6"/><rect x="8.6" y="-2" width="2.4" height="8"/><circle cx="-5" cy="-3" r="2.4"/><rect x="-1.5" y="-5" width="10" height="5" rx="1"/></g>
<path d="M481.8 940.4 C478.8 930.4 465.4 923.7 466.4 915.7 A19.6 19.6 0 1 1 497.3 915.7 C498.3 923.7 484.8 930.4 481.8 940.4 Z" fill="#78909C" stroke="#fff" stroke-width="1.5"/><circle cx="481.8" cy="903.6" r="6.6" fill="#fff"/>
<path d="M828.2 576.3 C825.2 566.3 811.8 559.6 812.8 551.6 A19.6 19.6 0 1 1 843.7 551.6 C844.7 559.6 831.2 566.3 828.2 576.3 Z" fill="#78909C" stroke="#fff" stroke-width="1.5"/><circle cx="828.2" cy="539.5" r="6.6" fill="#fff"/>
<path d="M779.0 697.7 C776.0 687.7 762.6 680.9 763.6 672.9 A19.6 19.6 0 1 1 794.5 672.9 C795.5 680.9 782.0 687.7 779.0 697.7 Z" fill="#4B96F3" stroke="#fff" stroke-width="1.5"/><g transform="translate(779.0 660.9)"><path d="M-10 -5.5 h20 v14.5 a1.5 1.5 0 0 1 -1.5 1.5 h-17 a1.5 1.5 0 0 1 -1.5 -1.5 Z" fill="#fff"/><path d="M-4.5 -5.5 a4.5 4.8 0 0 1 9 0" fill="none" stroke="#fff" stroke-width="2"/><path d="M-4.6 -1.5 a4.6 4.6 0 0 0 9.2 0" fill="none" stroke="#4B96F3" stroke-width="2"/></g>
<path d="M1259.2 551.3 C1256.2 541.3 1242.8 534.6 1243.8 526.6 A19.6 19.6 0 1 1 1274.7 526.6 C1275.7 534.6 1262.2 541.3 1259.2 551.3 Z" fill="#78909C" stroke="#fff" stroke-width="1.5"/><g transform="translate(1259.2 514.5)" fill="#fff"><path d="M0 -9.5 L13.5 -3 L0 3.5 L-13.5 -3 Z"/><path d="M-7.5 1.6 v4.6 c2 3 13 3 15 0 v-4.6 l-7.5 3.6 Z"/><rect x="11" y="-2.5" width="1.8" height="8.5"/></g>
<path d="M1010.9 706.5 C1007.9 696.5 994.4 689.8 995.4 681.8 A19.6 19.6 0 1 1 1026.3 681.8 C1027.3 689.8 1013.9 696.5 1010.9 706.5 Z" fill="#78909C" stroke="#fff" stroke-width="1.5"/><g transform="translate(1010.9 669.7)" fill="#fff"><path d="M0 -11.5 L11.5 -5 V-3.2 H-11.5 V-5 Z"/><rect x="-9" y="-1.5" width="3.6" height="8"/><rect x="-1.8" y="-1.5" width="3.6" height="8"/><rect x="5.4" y="-1.5" width="3.6" height="8"/><rect x="-11.5" y="8" width="23" height="2.8"/></g>
<path d="M1385.4 783.2 C1382.4 773.2 1369.0 766.4 1370.0 758.4 A19.6 19.6 0 1 1 1400.9 758.4 C1401.9 766.4 1388.4 773.2 1385.4 783.2 Z" fill="#34A853" stroke="#fff" stroke-width="1.5"/><circle cx="1385.4" cy="746.4" r="6.6" fill="#fff"/>
<path d="M1554.0 537.2 C1551.0 527.2 1537.6 520.5 1538.6 512.5 A19.6 19.6 0 1 1 1569.5 512.5 C1570.5 520.5 1557.0 527.2 1554.0 537.2 Z" fill="#4B96F3" stroke="#fff" stroke-width="1.5"/><g transform="translate(1554.0 500.4)"><path d="M-10 -5.5 h20 v14.5 a1.5 1.5 0 0 1 -1.5 1.5 h-17 a1.5 1.5 0 0 1 -1.5 -1.5 Z" fill="#fff"/><path d="M-4.5 -5.5 a4.5 4.8 0 0 1 9 0" fill="none" stroke="#fff" stroke-width="2"/><path d="M-4.6 -1.5 a4.6 4.6 0 0 0 9.2 0" fill="none" stroke="#4B96F3" stroke-width="2"/></g>
<path d="M1428.2 696.5 C1425.2 686.5 1411.8 679.7 1412.8 671.7 A19.6 19.6 0 1 1 1443.7 671.7 C1444.7 679.7 1431.2 686.5 1428.2 696.5 Z" fill="#34A853" stroke="#fff" stroke-width="1.5"/><circle cx="1428.2" cy="659.7" r="6.6" fill="#fff"/>
<path d="M1887.9 859.8 C1884.9 849.8 1871.4 843.0 1872.4 835.0 A19.6 19.6 0 1 1 1903.3 835.0 C1904.3 843.0 1890.9 849.8 1887.9 859.8 Z" fill="#78909C" stroke="#fff" stroke-width="1.5"/><g transform="translate(1887.9 823.0)" fill="#fff"><path d="M0 -11.5 L11.5 -5 V-3.2 H-11.5 V-5 Z"/><rect x="-9" y="-1.5" width="3.6" height="8"/><rect x="-1.8" y="-1.5" width="3.6" height="8"/><rect x="5.4" y="-1.5" width="3.6" height="8"/><rect x="-11.5" y="8" width="23" height="2.8"/></g>
<path d="M2091.5 851.7 C2088.5 841.7 2075.0 835.0 2076.0 827.0 A19.6 19.6 0 1 1 2106.9 827.0 C2107.9 835.0 2094.5 841.7 2091.5 851.7 Z" fill="#78909C" stroke="#fff" stroke-width="1.5"/><circle cx="2091.5" cy="814.9" r="6.6" fill="#fff"/>
<path d="M849.2 387.2 C847.2 370.7 823.7 358.7 823.7 340.7 A25.5 25.5 0 1 1 874.7 340.7 C874.7 358.7 851.2 370.7 849.2 387.2 Z" fill="#EA4335" stroke="#C5221F" stroke-width="1.2"/><circle cx="849.2" cy="340.7" r="9.5" fill="#B31412"/>
<text x="21.0" y="885.5" font-size="41" textLength="110" lengthAdjust="spacingAndGlyphs" fill="#fff" stroke="#fff" stroke-width="5" stroke-linejoin="round">Google</text><text x="21.0" y="885.5" font-size="41" textLength="110" lengthAdjust="spacingAndGlyphs" stroke-width="1.3"><tspan fill="#4285F4" stroke="#4285F4">G</tspan><tspan fill="#EA4335" stroke="#EA4335">o</tspan><tspan fill="#FBBC05" stroke="#FBBC05">o</tspan><tspan fill="#4285F4" stroke="#4285F4">g</tspan><tspan fill="#34A853" stroke="#34A853">l</tspan><tspan fill="#EA4335" stroke="#EA4335">e</tspan></text>
<defs><filter id="sh" x="-10%" y="-10%" width="120%" height="130%"><feDropShadow dx="0" dy="2" stdDeviation="3" flood-color="#000" flood-opacity=".3"/></filter></defs>
<g filter="url(#sh)"><rect x="20" y="20" width="336" height="80" rx="4" fill="#fff"/></g><rect x="158" y="20" width="1.5" height="80" fill="#E6E6E6"/>
<text x="54.5" y="72" font-size="35" font-weight="700" fill="#000" textLength="69" lengthAdjust="spacingAndGlyphs">Map</text>
<text x="193.5" y="72" font-size="35" fill="#565656" textLength="128" lengthAdjust="spacingAndGlyphs">Satellite</text>
<g filter="url(#sh)"><rect x="1983.4" y="20" width="80" height="80" rx="4" fill="#fff"/></g><path d="M2006 52 V42.5 H2015.5 M2031.5 42.5 H2041 V52 M2041 68 V77.5 H2031.5 M2015.5 77.5 H2006 V68" fill="none" stroke="#666" stroke-width="3.4"/>
<g filter="url(#sh)"><rect x="1983.4" y="546.8" width="80" height="80" rx="4" fill="#fff"/></g>
<g transform="translate(2023.4 586.8)"><circle cx="0" cy="-19" r="8.4" fill="#FBBC04" stroke="#E89A00" stroke-width="1"/><path d="M-9.5 -9 H9.5 C13.5 -9 15 -6 15.5 -2 L17 12 H11.5 L10.5 5 V27 H1.5 V12 H-1.5 V27 H-10.5 V5 L-11.5 12 H-17 L-15.5 -2 C-15 -6 -13.5 -9 -9.5 -9 Z" fill="#FBBC04" stroke="#E89A00" stroke-width="1"/><path d="M-6.5 -9 H6.5 L0 -1 Z" fill="#E37400"/></g>
<g filter="url(#sh)"><rect x="1983.4" y="690.7" width="80" height="160.5" rx="4" fill="#fff"/></g><rect x="1993.5" y="770.5" width="60" height="1.5" fill="#E6E6E6"/>
<path d="M2005.4 729.9 H2041.4 M2023.4 711.9 V747.9 M2005.4 812.2 H2041.4" stroke="#666" stroke-width="5.2" fill="none"/>
<rect x="1384" y="873.4" width="700" height="26" fill="#F5F5F5" opacity=".72"/>
<text x="1390" y="893.6" font-size="20" fill="#000" textLength="173.5" lengthAdjust="spacingAndGlyphs">Keyboard shortcuts</text>
<text x="1587.6" y="893.6" font-size="20" fill="#000" textLength="149.4" lengthAdjust="spacingAndGlyphs">Map data ©2022</text>
<text x="1761.8" y="893.6" font-size="20" fill="#000" textLength="117.2" lengthAdjust="spacingAndGlyphs">Terms of Use</text>
<text x="1903.7" y="893.6" font-size="20" fill="#000" textLength="166.0" lengthAdjust="spacingAndGlyphs">Report a map error</text>
</g></svg>
<!--MAP-END-->
</div>
<!-- CARD2 -->
<div class="card" style="left:315px;top:1270px;width:1100px;height:376px">
<div class="b" id="c2t" style="left:29.5px;top:40.3px;font-size:17px;color:#181C32;-webkit-text-stroke:.35px #181C32;--sx:1.1076">Program</div>
<div class="hr" style="top:69.6px"></div>
<div class="btn" style="left:927.35px;top:15.5px;width:143.5px;height:38.5px"></div>
<div class="b" id="tp" style="left:941.8px;top:39.2px;font-size:13.5px;color:#fff;--sx:1.1067">Tambah Program</div>
<div class="b th" id="h1" style="left:39.35px;top:122.4px;letter-spacing:1.00px;--sx:1.0071">JENIS DANA</div>
<div class="b th" id="h2" style="left:367.7px;top:122.4px;letter-spacing:1.00px;--sx:1.0078">PROGRAM</div>
<div class="b th" id="h3" style="left:817px;top:122.4px;letter-spacing:1.00px;--sx:1.0353">ACTIONS</div>
<div class="hr" style="top:139.8px;left:29.5px;right:29.15px"></div>
<div class="b td" id="r1a" style="left:39.35px;top:171.3px;font-size:12.6px;--sx:0.9561">INFAK</div>
<div class="b td" id="r1b" style="left:367.7px;top:171.3px;--sx:1.0652">Sembako Gratis</div>
<div class="hr" style="top:192.7px;left:29.5px;right:29.15px"></div>
<div class="b td" id="r2a" style="left:39.35px;top:224.3px;font-size:12.6px;--sx:0.9170">SEDEKAH</div>
<div class="b td" id="r2b" style="left:367.7px;top:224.3px;--sx:1.0642">Sedekah Bersama</div>
<div class="del" style="left:817px;top:150.5px"><svg class="abs" style="left:10px;top:8px" width="12" height="16" viewBox="0 0 12 16"><rect x="0.3" y="3.6" width="11.4" height="12" rx="1.2" fill="#F64E60"/><path d="M0 1.3 H4 L4.6 .4 H7.4 L8 1.3 H12 V2.4 H0 Z" fill="#F64E60" opacity=".35"/></svg></div>
<div class="del" style="left:817px;top:203.4px"><svg class="abs" style="left:10px;top:8px" width="12" height="16" viewBox="0 0 12 16"><rect x="0.3" y="3.6" width="11.4" height="12" rx="1.2" fill="#F64E60"/><path d="M0 1.3 H4 L4.6 .4 H7.4 L8 1.3 H12 V2.4 H0 Z" fill="#F64E60" opacity=".35"/></svg></div>
<div class="hr" style="top:284.6px"></div>
<div class="btn" style="left:992.35px;top:312px;width:78.5px;height:37.7px"></div>
<div class="b" id="sp" style="left:1006.8px;top:335.5px;font-size:13.5px;color:#fff;--sx:1.0836">Simpan</div>
</div>
<!-- FOOTER -->
<div class="abs" style="left:0;top:1696px;width:1440px;height:46px;background:#fff"></div>
<div class="b" id="f1" style="left:75.2px;top:1723.6px;font-size:13.5px;color:#B5B5C3;-webkit-text-stroke:.3px #B5B5C3;--sx:0.9992">2022 ©</div>
<div class="b" id="f2" style="left:129.7px;top:1723.6px;font-size:13.5px;color:#3F4254;--sx:1.0238">Simpz</div>
<div class="abs" style="left:1383.85px;top:1665.8px;width:36.15px;height:36.2px;border-radius:5.5px;background:rgba(105,147,255,.32);box-shadow:0 0 15px 1px rgba(69,65,78,.08)"></div>
<svg class="abs" style="left:1394.4px;top:1677.4px" width="15" height="15" viewBox="0 0 15 15" fill="none" stroke="rgba(255,255,255,.8)" stroke-width="2" stroke-linecap="round" stroke-linejoin="round"><path d="M1.8 7 L7.5 1.6 L13.2 7"/><path d="M7.5 4.5 V14" stroke="rgba(255,255,255,.35)"/></svg>
</body>
</html>
